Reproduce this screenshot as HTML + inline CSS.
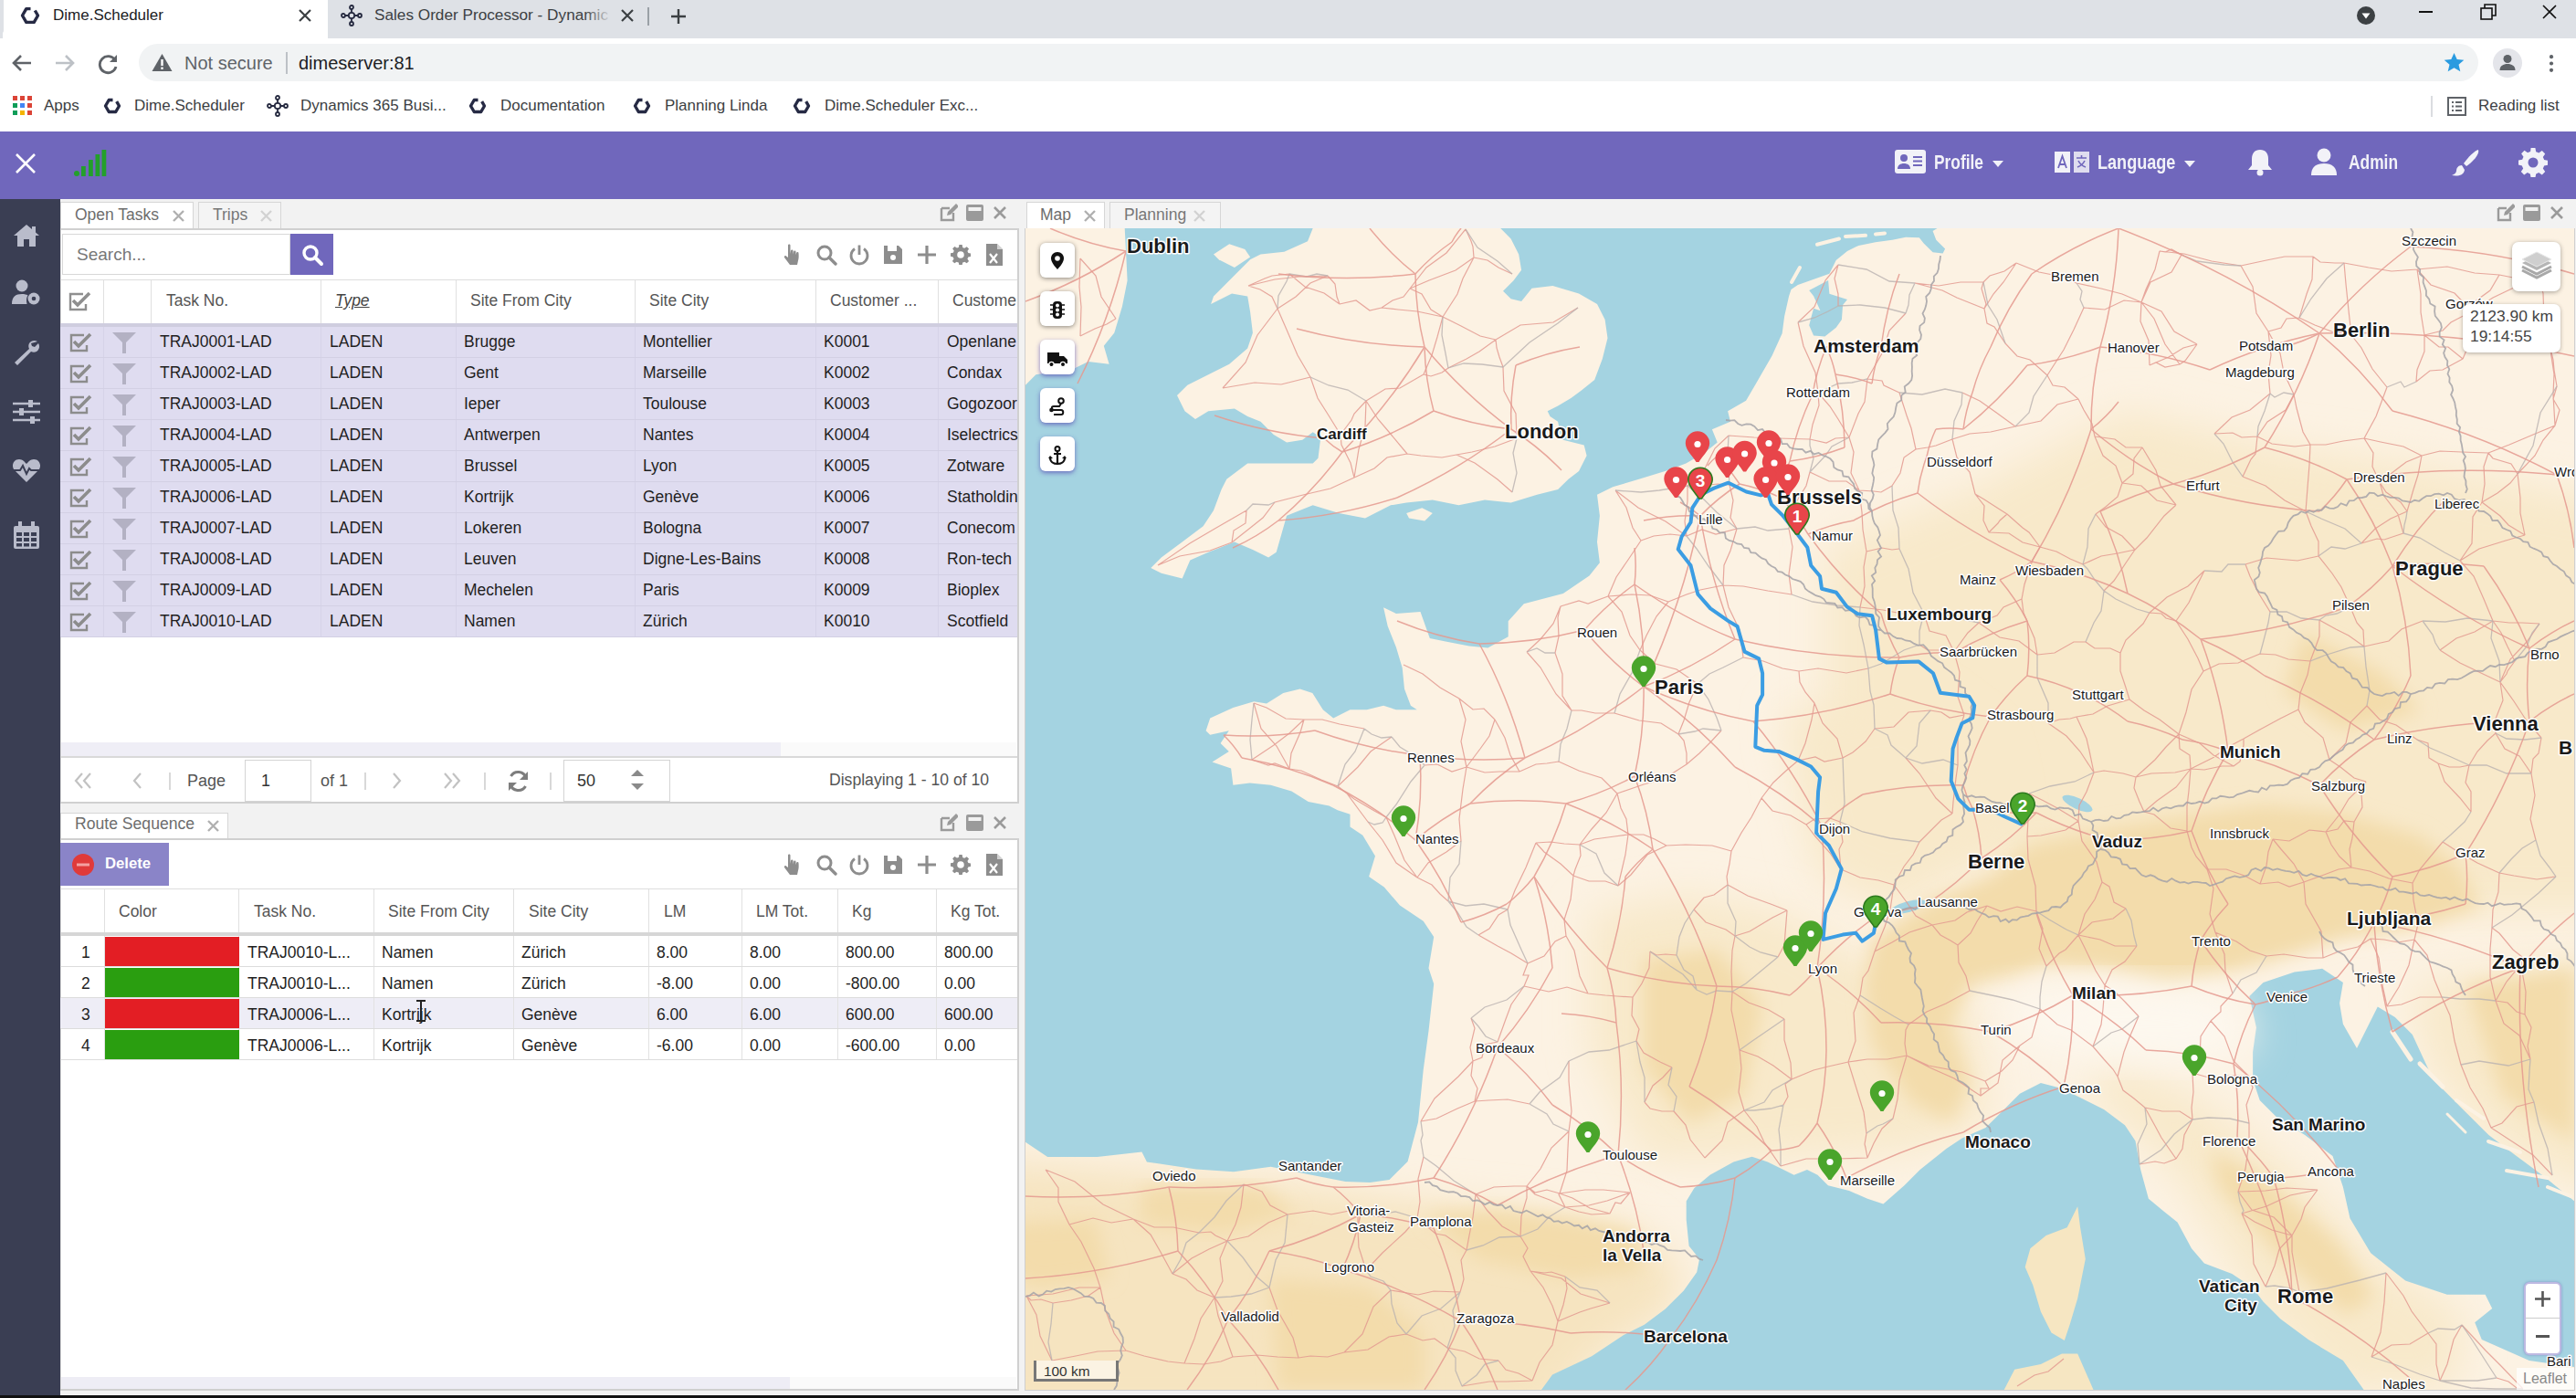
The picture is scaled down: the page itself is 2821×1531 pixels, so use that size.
<!DOCTYPE html><html><head><meta charset="utf-8"><style>html,body{margin:0;padding:0;}body{width:2821px;height:1531px;overflow:hidden;position:relative;font-family:"Liberation Sans",sans-serif;background:#f2f2f2}</style></head><body><div style="position:absolute;left:0px;top:0px;width:2821px;height:42px;background:#dee1e6"></div><div style="position:absolute;left:3px;top:0px;width:356px;height:42px;background:#fff"></div><div style="position:absolute;left:0px;top:0px;width:4px;height:37px;background:#dee1e6;border-radius:0 0 4px 0"></div><svg style="position:absolute;left:21.0px;top:5.0px;" width="24" height="24" viewBox="0 0 24 24"><path d="M12.50 4.64 L7.75 4.64 L3.50 12.00 L7.75 19.36 L16.25 19.36 L20.50 12.00 L17.31 6.48" fill="none" stroke="#262a44" stroke-width="3.4" stroke-linejoin="round"/></svg><div style="position:absolute;left:58px;top:8px;font-size:17px;line-height:17px;color:#202124;font-weight:normal;white-space:nowrap;">Dime.Scheduler</div><svg style="position:absolute;left:326px;top:9px;" width="16" height="16" viewBox="0 0 16 16"><path d="M2 2L14 14M14 2L2 14" stroke="#3c4043" stroke-width="2.2"/></svg><svg style="position:absolute;left:373px;top:5px;" width="24" height="24" viewBox="0 0 24 24"><g fill="none" stroke="#262a40" stroke-width="1.8"><circle cx="12" cy="12" r="3.2"/><circle cx="12" cy="3" r="2"/><circle cx="12" cy="21" r="2"/><circle cx="3" cy="12" r="2"/><circle cx="21" cy="12" r="2"/><path d="M12 5v4M12 15v4M5 12h4M15 12h4"/></g></svg><div style="position:absolute;left:410px;top:8px;font-size:17.2px;line-height:17.2px;color:#3c4043;font-weight:normal;white-space:nowrap;">Sales Order Processor - Dynamic</div><div style="position:absolute;left:640px;top:4px;width:30px;height:30px;background:linear-gradient(90deg,rgba(222,225,230,0),#dee1e6)"></div><svg style="position:absolute;left:679px;top:9px;" width="16" height="16" viewBox="0 0 16 16"><path d="M2 2L14 14M14 2L2 14" stroke="#3c4043" stroke-width="2.2"/></svg><div style="position:absolute;left:709px;top:8px;width:2px;height:20px;background:#9aa0a6"></div><svg style="position:absolute;left:733px;top:8px;" width="20" height="20" viewBox="0 0 20 20"><path d="M10 2V18M2 10H18" stroke="#3c4043" stroke-width="2.4"/></svg><svg style="position:absolute;left:2580px;top:6px;" width="22" height="22" viewBox="0 0 22 22"><circle cx="11" cy="11" r="10" fill="#3c4043"/><path d="M6.5 8.5h9l-4.5 6z" fill="#fff"/></svg><div style="position:absolute;left:2649px;top:12px;width:15px;height:2px;background:#111"></div><svg style="position:absolute;left:2716px;top:4px;" width="18" height="18" viewBox="0 0 18 18"><rect x="1" y="5" width="12" height="12" fill="none" stroke="#111" stroke-width="1.6"/><path d="M5 5V1h12v12h-4" fill="none" stroke="#111" stroke-width="1.6"/></svg><svg style="position:absolute;left:2783px;top:4px;" width="18" height="18" viewBox="0 0 18 18"><path d="M2 2L16 16M16 2L2 16" stroke="#111" stroke-width="1.6"/></svg><div style="position:absolute;left:0px;top:42px;width:2821px;height:102px;background:#fff"></div><svg style="position:absolute;left:12px;top:58px;" width="24" height="22" viewBox="0 0 24 22"><path d="M22 11H4M11 3L3 11L11 19" fill="none" stroke="#5f6368" stroke-width="2.6"/></svg><svg style="position:absolute;left:59px;top:58px;" width="24" height="22" viewBox="0 0 24 22"><path d="M2 11H20M13 3L21 11L13 19" fill="none" stroke="#bdc1c6" stroke-width="2.6"/></svg><svg style="position:absolute;left:107px;top:58px;" width="24" height="24" viewBox="0 0 24 24"><path d="M19 8A9 9 0 1 0 20 15" fill="none" stroke="#5f6368" stroke-width="2.8"/><path d="M21 2v8h-8z" fill="#5f6368"/></svg><div style="position:absolute;left:152px;top:48px;width:2562px;height:41px;background:#f1f3f4;border-radius:21px"></div><svg style="position:absolute;left:166px;top:58px;" width="23" height="21" viewBox="0 0 23 21"><path d="M11.5 1L22.5 20H0.5z" fill="#5f6368"/><rect x="10.3" y="7" width="2.4" height="7" fill="#fff"/><rect x="10.3" y="15.5" width="2.4" height="2.4" fill="#fff"/></svg><div style="position:absolute;left:202px;top:59px;font-size:20px;line-height:20px;color:#5f6368;font-weight:normal;white-space:nowrap;">Not secure</div><div style="position:absolute;left:313px;top:57px;width:2px;height:24px;background:#bdc1c6"></div><div style="position:absolute;left:327px;top:59px;font-size:20px;line-height:20px;color:#202124;font-weight:normal;white-space:nowrap;">dimeserver:81</div><svg style="position:absolute;left:2676px;top:57px;" width="23" height="23" viewBox="0 0 23 23"><path d="M11.5 1l3.2 7 7.6.7-5.8 5 1.8 7.5-6.8-4-6.8 4 1.8-7.5-5.8-5 7.6-.7z" fill="#2a9be0"/></svg><svg style="position:absolute;left:2729px;top:52px;" width="34" height="34" viewBox="0 0 34 34"><circle cx="17" cy="17" r="16" fill="#e4e5ea"/><circle cx="17" cy="12.5" r="4.5" fill="#5f6368"/><path d="M8.5 25c0-5 4-7 8.5-7s8.5 2 8.5 7z" fill="#5f6368"/></svg><svg style="position:absolute;left:2789px;top:59px;" width="10" height="22" viewBox="0 0 10 22"><circle cx="5" cy="3.2" r="2.1" fill="#5f6368"/><circle cx="5" cy="10.5" r="2.1" fill="#5f6368"/><circle cx="5" cy="17.8" r="2.1" fill="#5f6368"/></svg><svg style="position:absolute;left:14px;top:105px;" width="21" height="21" viewBox="0 0 21 21"><rect x="0" y="0" width="5" height="5" fill="#db4437"/><rect x="8" y="0" width="5" height="5" fill="#db4437"/><rect x="16" y="0" width="5" height="5" fill="#db4437"/><rect x="0" y="8" width="5" height="5" fill="#0f9d58"/><rect x="8" y="8" width="5" height="5" fill="#4285f4"/><rect x="16" y="8" width="5" height="5" fill="#db4437"/><rect x="0" y="16" width="5" height="5" fill="#0f9d58"/><rect x="8" y="16" width="5" height="5" fill="#f4b400"/><rect x="16" y="16" width="5" height="5" fill="#db4437"/></svg><div style="position:absolute;left:48px;top:107px;font-size:17px;line-height:17px;color:#3c4043;font-weight:normal;white-space:nowrap;">Apps</div><svg style="position:absolute;left:112.0px;top:105.0px;" width="22" height="22" viewBox="0 0 22 22"><path d="M11.50 4.50 L7.25 4.50 L3.50 11.00 L7.25 17.50 L14.75 17.50 L18.50 11.00 L15.69 6.13" fill="none" stroke="#262a44" stroke-width="3.4" stroke-linejoin="round"/></svg><div style="position:absolute;left:147px;top:107px;font-size:17px;line-height:17px;color:#3c4043;font-weight:normal;white-space:nowrap;">Dime.Scheduler</div><svg style="position:absolute;left:292px;top:104px;" width="24" height="24" viewBox="0 0 24 24"><g fill="none" stroke="#262a40" stroke-width="1.8"><circle cx="12" cy="12" r="3.2"/><circle cx="12" cy="3" r="2"/><circle cx="12" cy="21" r="2"/><circle cx="3" cy="12" r="2"/><circle cx="21" cy="12" r="2"/><path d="M12 5v4M12 15v4M5 12h4M15 12h4"/></g></svg><div style="position:absolute;left:329px;top:107px;font-size:17px;line-height:17px;color:#3c4043;font-weight:normal;white-space:nowrap;">Dynamics 365 Busi...</div><svg style="position:absolute;left:512.0px;top:105.0px;" width="22" height="22" viewBox="0 0 22 22"><path d="M11.50 4.50 L7.25 4.50 L3.50 11.00 L7.25 17.50 L14.75 17.50 L18.50 11.00 L15.69 6.13" fill="none" stroke="#262a44" stroke-width="3.4" stroke-linejoin="round"/></svg><div style="position:absolute;left:548px;top:107px;font-size:17px;line-height:17px;color:#3c4043;font-weight:normal;white-space:nowrap;">Documentation</div><svg style="position:absolute;left:692.0px;top:105.0px;" width="22" height="22" viewBox="0 0 22 22"><path d="M11.50 4.50 L7.25 4.50 L3.50 11.00 L7.25 17.50 L14.75 17.50 L18.50 11.00 L15.69 6.13" fill="none" stroke="#262a44" stroke-width="3.4" stroke-linejoin="round"/></svg><div style="position:absolute;left:728px;top:107px;font-size:17px;line-height:17px;color:#3c4043;font-weight:normal;white-space:nowrap;">Planning Linda</div><svg style="position:absolute;left:867.0px;top:105.0px;" width="22" height="22" viewBox="0 0 22 22"><path d="M11.50 4.50 L7.25 4.50 L3.50 11.00 L7.25 17.50 L14.75 17.50 L18.50 11.00 L15.69 6.13" fill="none" stroke="#262a44" stroke-width="3.4" stroke-linejoin="round"/></svg><div style="position:absolute;left:903px;top:107px;font-size:17px;line-height:17px;color:#3c4043;font-weight:normal;white-space:nowrap;">Dime.Scheduler Exc...</div><div style="position:absolute;left:2662px;top:105px;width:2px;height:23px;background:#dadce0"></div><svg style="position:absolute;left:2680px;top:106px;" width="21" height="21" viewBox="0 0 21 21"><rect x="1" y="1" width="19" height="19" fill="none" stroke="#5f6368" stroke-width="2"/><g fill="#5f6368"><rect x="5" y="5" width="2" height="2"/><rect x="9" y="5" width="7" height="2"/><rect x="5" y="9.5" width="2" height="2"/><rect x="9" y="9.5" width="7" height="2"/><rect x="5" y="14" width="2" height="2"/><rect x="9" y="14" width="7" height="2"/></g></svg><div style="position:absolute;left:2714px;top:107px;font-size:17px;line-height:17px;color:#3c4043;font-weight:normal;white-space:nowrap;">Reading list</div><div style="position:absolute;left:0px;top:144px;width:2821px;height:74px;background:#7067bc"></div><svg style="position:absolute;left:15px;top:166px;" width="26" height="26" viewBox="0 0 26 26"><path d="M3 3L23 23M23 3L3 23" stroke="#fff" stroke-width="2.6"/></svg><svg style="position:absolute;left:78px;top:160px;" width="42" height="36" viewBox="0 0 42 36"><circle cx="6" cy="30" r="3" fill="#23a02b"/><rect x="11" y="22" width="4.8" height="11" fill="#23a02b"/><rect x="19" y="15" width="4.8" height="18" fill="#23a02b"/><rect x="26.5" y="9" width="4.8" height="24" fill="#23a02b"/><rect x="33.5" y="4" width="4.8" height="29" fill="#23a02b"/></svg><svg style="position:absolute;left:2075px;top:164px;" width="34" height="26" viewBox="0 0 34 26"><rect x="0" y="0" width="34" height="26" rx="3" fill="#f2f2f8"/><circle cx="10" cy="9" r="4" fill="#7067bc"/><path d="M3 21c0-4 3-6 7-6s7 2 7 6z" fill="#7067bc"/><rect x="20" y="7" width="10" height="2" fill="#7067bc"/><rect x="20" y="11.5" width="10" height="2" fill="#7067bc"/><rect x="20" y="16" width="10" height="2" fill="#7067bc"/></svg><div style="position:absolute;left:2118px;top:167px;font-size:22px;line-height:22px;color:#f2f2f8;font-weight:bold;white-space:nowrap;transform:scaleX(.788);transform-origin:0 0">Profile</div><svg style="position:absolute;left:2182px;top:176px;" width="12" height="8" viewBox="0 0 12 8"><path d="M0 0H12L6 7z" fill="#f2f2f8"/></svg><svg style="position:absolute;left:2250px;top:166px;" width="38" height="23" viewBox="0 0 38 23"><rect x="0" y="0" width="17" height="23" fill="#f2f2f8"/><rect x="21" y="0" width="17" height="23" fill="#f2f2f8" opacity=".85"/><path d="M4 18L8.5 5 13 18M5.5 14h6" fill="none" stroke="#7067bc" stroke-width="1.8"/><path d="M24 7h11M29.5 4v3M26 10c2 4 5 6 8 7M33 10c-2 4-5 6-8 7" fill="none" stroke="#7067bc" stroke-width="1.6"/></svg><div style="position:absolute;left:2297px;top:167px;font-size:22px;line-height:22px;color:#f2f2f8;font-weight:bold;white-space:nowrap;transform:scaleX(.822);transform-origin:0 0">Language</div><svg style="position:absolute;left:2392px;top:176px;" width="12" height="8" viewBox="0 0 12 8"><path d="M0 0H12L6 7z" fill="#f2f2f8"/></svg><svg style="position:absolute;left:2461px;top:162px;" width="28" height="32" viewBox="0 0 28 32"><path d="M14 2c-6 0-9 4-9 10v7l-4 5h26l-4-5v-7c0-6-3-10-9-10z" fill="#f2f2f8"/><circle cx="14" cy="27" r="3.5" fill="#f2f2f8"/></svg><svg style="position:absolute;left:2531px;top:162px;" width="28" height="30" viewBox="0 0 28 30"><circle cx="14" cy="8" r="7.5" fill="#f2f2f8"/><path d="M0 30c0-9 5-13 14-13s14 4 14 13z" fill="#f2f2f8"/></svg><div style="position:absolute;left:2572px;top:167px;font-size:22px;line-height:22px;color:#f2f2f8;font-weight:bold;white-space:nowrap;transform:scaleX(.789);transform-origin:0 0">Admin</div><svg style="position:absolute;left:2684px;top:162px;" width="32" height="32" viewBox="0 0 32 32"><path d="M30 2c-3 0-12 9-16 15l3 3c6-4 15-13 13-18z" fill="#f2f2f8"/><path d="M12 19c-4 0-6 3-6 6 0 2-2 4-5 5 5 1 13 1 14-6z" fill="#f2f2f8"/></svg><svg style="position:absolute;left:2758px;top:162px;" width="32" height="32" viewBox="0 0 32 32"><path fill="#f2f2f8" d="M13.6 0h4.8l.8 4.2a12 12 0 0 1 3 1.3l3.6-2.4 3.4 3.4-2.4 3.6a12 12 0 0 1 1.3 3l4.2.8v4.8l-4.2.8a12 12 0 0 1-1.3 3l2.4 3.6-3.4 3.4-3.6-2.4a12 12 0 0 1-3 1.3l-.8 4.2h-4.8l-.8-4.2a12 12 0 0 1-3-1.3l-3.6 2.4-3.4-3.4 2.4-3.6a12 12 0 0 1-1.3-3L0 18.4v-4.8l4.2-.8a12 12 0 0 1 1.3-3L3.1 6.2l3.4-3.4 3.6 2.4a12 12 0 0 1 3-1.3zM16 10.5a5.5 5.5 0 1 0 0 11 5.5 5.5 0 1 0 0-11z"/></svg><div style="position:absolute;left:0px;top:218px;width:66px;height:1313px;background:#3a3e53"></div><svg style="position:absolute;left:14px;top:245px;" width="30" height="26" viewBox="0 0 30 26"><path d="M15 1L1 13h4v12h7v-8h6v8h7V13h4L25 9.5V3h-4v3z" fill="#b9bccb"/></svg><svg style="position:absolute;left:13px;top:306px;" width="32" height="30" viewBox="0 0 32 30"><circle cx="11" cy="7" r="6.5" fill="#b9bccb"/><path d="M0 27c0-8 4-11 11-11 3 0 5 .5 6.5 1.5-1.5 2-2 5-1 9.5z" fill="#b9bccb"/><g transform="translate(24 21)"><circle r="6.5" fill="#b9bccb"/><circle r="2.3" fill="#3a3e53"/></g></svg><svg style="position:absolute;left:14px;top:371px;" width="30" height="30" viewBox="0 0 30 30"><path d="M27 3c-3-2-7-1-9 2-1 2-1 4 0 6L2 26l3 3 15-15c2 1 4 1 6 0 3-2 4-6 2-9l-4 4-3-1-1-3z" fill="#b9bccb"/></svg><svg style="position:absolute;left:13px;top:438px;" width="32" height="26" viewBox="0 0 32 26"><g stroke="#b9bccb" stroke-width="2.4"><path d="M1 4h30M1 13h30M1 22h30"/></g><g fill="#b9bccb"><rect x="18" y="0" width="5" height="8"/><rect x="8" y="9" width="5" height="8"/><rect x="20" y="18" width="5" height="8"/></g></svg><svg style="position:absolute;left:13px;top:501px;" width="32" height="28" viewBox="0 0 32 28"><path d="M16 27L3 14C-1 10 1 2 8 2c4 0 6 3 8 5 2-2 4-5 8-5 7 0 9 8 5 12z" fill="#b9bccb"/><path d="M1 14h8l3-5 4 9 3-6 2 2h12" fill="none" stroke="#3a3e53" stroke-width="2"/></svg><svg style="position:absolute;left:15px;top:571px;" width="28" height="30" viewBox="0 0 28 30"><rect x="0" y="5" width="28" height="25" rx="2" fill="#b9bccb"/><rect x="5" y="0" width="4" height="8" fill="#b9bccb"/><rect x="19" y="0" width="4" height="8" fill="#b9bccb"/><g fill="#3a3e53"><rect x="3" y="12" width="6" height="4"/><rect x="11" y="12" width="6" height="4"/><rect x="19" y="12" width="6" height="4"/><rect x="3" y="18" width="6" height="4"/><rect x="11" y="18" width="6" height="4"/><rect x="19" y="18" width="6" height="4"/><rect x="3" y="24" width="6" height="3.5"/><rect x="11" y="24" width="6" height="3.5"/><rect x="19" y="24" width="6" height="3.5"/></g></svg><div style="position:absolute;left:66px;top:218px;width:2755px;height:1310px;background:#f2f2f2"></div><div style="position:absolute;left:0px;top:1528px;width:2821px;height:3px;background:#111"></div><div style="position:absolute;left:66px;top:221px;width:146px;height:30px;background:#fff;border:1px solid #d6d6d6;border-bottom:none;box-sizing:border-box"></div><div style="position:absolute;left:82px;top:227px;font-size:17.5px;line-height:17.5px;color:#6d6d6d;font-weight:normal;white-space:nowrap;">Open Tasks</div><svg style="position:absolute;left:189px;top:230px;" width="13" height="13" viewBox="0 0 13 13"><path d="M1 1L12 12M12 1L1 12" stroke="#b0b0b0" stroke-width="2.4"/></svg><div style="position:absolute;left:217px;top:221px;width:91px;height:29px;background:#f4f4f4;border:1px solid #d6d6d6;border-bottom:none;box-sizing:border-box"></div><div style="position:absolute;left:233px;top:227px;font-size:17.5px;line-height:17.5px;color:#777;font-weight:normal;white-space:nowrap;">Trips</div><svg style="position:absolute;left:285px;top:230px;" width="13" height="13" viewBox="0 0 13 13"><path d="M1 1L12 12M12 1L1 12" stroke="#d2d2d2" stroke-width="2.4"/></svg><svg style="position:absolute;left:1029px;top:223px;" width="20" height="20" viewBox="0 0 20 20"><path d="M2 5h9M2 5v13h13V10" fill="none" stroke="#9a9a9a" stroke-width="2.4"/><path d="M8 13l1-4 9-9 3 3-9 9z" fill="#9a9a9a"/></svg><svg style="position:absolute;left:1058px;top:224px;" width="19" height="18" viewBox="0 0 19 18"><rect x="0" y="0" width="19" height="18" rx="2" fill="#9a9a9a"/><rect x="2.5" y="3" width="14" height="4" fill="#f2f2f2"/></svg><svg style="position:absolute;left:1088px;top:226px;" width="14" height="14" viewBox="0 0 14 14"><path d="M1 1L13 13M13 1L1 13" stroke="#9a9a9a" stroke-width="2.6"/></svg><div style="position:absolute;left:66px;top:250px;width:1050px;height:630px;background:#fff;border:2px solid #d0d0d0;border-left:1px solid #dcdcdc;box-sizing:border-box"></div><div style="position:absolute;left:68px;top:256px;width:250px;height:45px;background:#fff;border:1px solid #d8d8d8;box-sizing:border-box"></div><div style="position:absolute;left:84px;top:269px;font-size:19px;line-height:19px;color:#777;font-weight:normal;white-space:nowrap;">Search...</div><div style="position:absolute;left:318px;top:256px;width:47px;height:45px;background:#7067bc"></div><svg style="position:absolute;left:330px;top:267px;" width="25" height="25" viewBox="0 0 25 25"><circle cx="10" cy="10" r="7" fill="none" stroke="#fff" stroke-width="3.4"/><path d="M15 15L22 22" stroke="#fff" stroke-width="4" stroke-linecap="round"/></svg><svg style="position:absolute;left:856px;top:265.5px;" width="24" height="26" viewBox="0 0 24 26"><path d="M7 2.5c0-1.5 2.5-1.5 2.5 0V12l.5-3.5c.3-1.3 2.3-1.3 2.5 0l.2 4 .4-3c.3-1.3 2.3-1.2 2.4.1l.2 3.4.5-2.3c.3-1.2 2.2-1 2.3.3.3 3 .3 6-.5 8.5L17 24H9l-6-8c-.8-1.2.8-2.7 2-1.6L7 16z" fill="#8d8d8d"/></svg><svg style="position:absolute;left:893px;top:266.5px;" width="24" height="24" viewBox="0 0 24 24"><circle cx="10" cy="10" r="7" fill="none" stroke="#8d8d8d" stroke-width="3"/><path d="M15 15L22 22" stroke="#8d8d8d" stroke-width="3.4" stroke-linecap="round"/></svg><svg style="position:absolute;left:929px;top:266.5px;" width="24" height="24" viewBox="0 0 24 24"><path d="M7 5.5A9 9 0 1 0 17 5.5" fill="none" stroke="#8d8d8d" stroke-width="2.8"/><path d="M12 1.5V12" stroke="#8d8d8d" stroke-width="2.8"/></svg><svg style="position:absolute;left:967px;top:267.5px;" width="22" height="22" viewBox="0 0 22 22"><path d="M1 1h16l4 4v16H1z" fill="#8d8d8d"/><rect x="5" y="1" width="10" height="6" fill="#fff"/><circle cx="11" cy="14" r="3" fill="#fff"/></svg><svg style="position:absolute;left:1003px;top:266.5px;" width="24" height="24" viewBox="0 0 24 24"><path d="M12 2V22M2 12H22" stroke="#8d8d8d" stroke-width="3.2"/></svg><svg style="position:absolute;left:1041px;top:267.5px;" width="22" height="22" viewBox="0 0 32 32"><path fill="#8d8d8d" d="M13.6 0h4.8l.8 4.2a12 12 0 0 1 3 1.3l3.6-2.4 3.4 3.4-2.4 3.6a12 12 0 0 1 1.3 3l4.2.8v4.8l-4.2.8a12 12 0 0 1-1.3 3l2.4 3.6-3.4 3.4-3.6-2.4a12 12 0 0 1-3 1.3l-.8 4.2h-4.8l-.8-4.2a12 12 0 0 1-3-1.3l-3.6 2.4-3.4-3.4 2.4-3.6a12 12 0 0 1-1.3-3L0 18.4v-4.8l4.2-.8a12 12 0 0 1 1.3-3L3.1 6.2l3.4-3.4 3.6 2.4a12 12 0 0 1 3-1.3zM16 10.5a5.5 5.5 0 1 0 0 11 5.5 5.5 0 1 0 0-11z"/></svg><svg style="position:absolute;left:1079px;top:265.5px;" width="20" height="26" viewBox="0 0 20 26"><path d="M1 1h12l6 6v18H1z" fill="#8d8d8d"/><path d="M13 1v6h6" fill="#fff" opacity=".6"/><path d="M5 12l8 10M13 12l-8 10" stroke="#fff" stroke-width="2.2"/></svg><div style="position:absolute;left:66px;top:306px;width:1048px;height:1px;background:#dedede"></div><div style="position:absolute;left:66px;top:354px;width:1048px;height:4px;background:#cfcddf"></div><div style="position:absolute;left:113px;top:307px;width:1px;height:47px;background:#e0e0e0"></div><div style="position:absolute;left:165px;top:307px;width:1px;height:47px;background:#e0e0e0"></div><div style="position:absolute;left:351px;top:307px;width:1px;height:47px;background:#e0e0e0"></div><div style="position:absolute;left:499px;top:307px;width:1px;height:47px;background:#e0e0e0"></div><div style="position:absolute;left:695px;top:307px;width:1px;height:47px;background:#e0e0e0"></div><div style="position:absolute;left:893px;top:307px;width:1px;height:47px;background:#e0e0e0"></div><div style="position:absolute;left:1027px;top:307px;width:1px;height:47px;background:#e0e0e0"></div><svg style="position:absolute;left:74px;top:319px;" width="26" height="23" viewBox="0 0 26 23"><path d="M17 3H3v17h17v-6" fill="none" stroke="#8f8f8f" stroke-width="2.4"/><path d="M6 10l5 5L24 2" fill="none" stroke="#8f8f8f" stroke-width="3.6"/></svg><div style="position:absolute;left:182px;top:321px;font-size:17.5px;line-height:17.5px;color:#555;font-weight:normal;white-space:nowrap;">Task No.</div><div style="position:absolute;left:367px;top:321px;font-size:17.5px;line-height:17.5px;color:#555;font-weight:normal;white-space:nowrap;"><i style="text-decoration:underline;color:#444">Type</i></div><div style="position:absolute;left:515px;top:321px;font-size:17.5px;line-height:17.5px;color:#555;font-weight:normal;white-space:nowrap;">Site From City</div><div style="position:absolute;left:711px;top:321px;font-size:17.5px;line-height:17.5px;color:#555;font-weight:normal;white-space:nowrap;">Site City</div><div style="position:absolute;left:909px;top:321px;font-size:17.5px;line-height:17.5px;color:#555;font-weight:normal;white-space:nowrap;">Customer ...</div><div style="position:absolute;left:1043px;top:321px;font-size:17.5px;line-height:17.5px;color:#555;font-weight:normal;white-space:nowrap;">Custome</div><div style="position:absolute;left:66px;top:358px;width:1048px;height:33px;background:#dfdcf0"></div><div style="position:absolute;left:66px;top:391px;width:1048px;height:1px;background:#d3d0e4"></div><div style="position:absolute;left:113px;top:358px;width:1px;height:33px;background:#d6d3e8"></div><div style="position:absolute;left:165px;top:358px;width:1px;height:33px;background:#d6d3e8"></div><div style="position:absolute;left:351px;top:358px;width:1px;height:33px;background:#d6d3e8"></div><div style="position:absolute;left:499px;top:358px;width:1px;height:33px;background:#d6d3e8"></div><div style="position:absolute;left:695px;top:358px;width:1px;height:33px;background:#d6d3e8"></div><div style="position:absolute;left:893px;top:358px;width:1px;height:33px;background:#d6d3e8"></div><div style="position:absolute;left:1027px;top:358px;width:1px;height:33px;background:#d6d3e8"></div><svg style="position:absolute;left:75px;top:364px;" width="26" height="23" viewBox="0 0 26 23"><path d="M17 3H3v17h17v-6" fill="none" stroke="#8c8c8c" stroke-width="2.4"/><path d="M6 10l5 5L24 2" fill="none" stroke="#8c8c8c" stroke-width="3.6"/></svg><svg style="position:absolute;left:123px;top:363px;" width="26" height="25" viewBox="0 0 26 25"><path d="M0 1h26L15 12v12h-4V12z" fill="#b3b1c3"/></svg><div style="position:absolute;left:175px;top:366px;font-size:17.5px;line-height:17.5px;color:#1f1f1f;font-weight:normal;white-space:nowrap;">TRAJ0001-LAD</div><div style="position:absolute;left:361px;top:366px;font-size:17.5px;line-height:17.5px;color:#1f1f1f;font-weight:normal;white-space:nowrap;">LADEN</div><div style="position:absolute;left:508px;top:366px;font-size:17.5px;line-height:17.5px;color:#1f1f1f;font-weight:normal;white-space:nowrap;">Brugge</div><div style="position:absolute;left:704px;top:366px;font-size:17.5px;line-height:17.5px;color:#1f1f1f;font-weight:normal;white-space:nowrap;">Montellier</div><div style="position:absolute;left:902px;top:366px;font-size:17.5px;line-height:17.5px;color:#1f1f1f;font-weight:normal;white-space:nowrap;">K0001</div><div style="position:absolute;left:1037px;top:366px;font-size:17.5px;line-height:17.5px;color:#1f1f1f;font-weight:normal;white-space:nowrap;">Openlane</div><div style="position:absolute;left:66px;top:392px;width:1048px;height:33px;background:#dfdcf0"></div><div style="position:absolute;left:66px;top:425px;width:1048px;height:1px;background:#d3d0e4"></div><div style="position:absolute;left:113px;top:392px;width:1px;height:33px;background:#d6d3e8"></div><div style="position:absolute;left:165px;top:392px;width:1px;height:33px;background:#d6d3e8"></div><div style="position:absolute;left:351px;top:392px;width:1px;height:33px;background:#d6d3e8"></div><div style="position:absolute;left:499px;top:392px;width:1px;height:33px;background:#d6d3e8"></div><div style="position:absolute;left:695px;top:392px;width:1px;height:33px;background:#d6d3e8"></div><div style="position:absolute;left:893px;top:392px;width:1px;height:33px;background:#d6d3e8"></div><div style="position:absolute;left:1027px;top:392px;width:1px;height:33px;background:#d6d3e8"></div><svg style="position:absolute;left:75px;top:398px;" width="26" height="23" viewBox="0 0 26 23"><path d="M17 3H3v17h17v-6" fill="none" stroke="#8c8c8c" stroke-width="2.4"/><path d="M6 10l5 5L24 2" fill="none" stroke="#8c8c8c" stroke-width="3.6"/></svg><svg style="position:absolute;left:123px;top:397px;" width="26" height="25" viewBox="0 0 26 25"><path d="M0 1h26L15 12v12h-4V12z" fill="#b3b1c3"/></svg><div style="position:absolute;left:175px;top:400px;font-size:17.5px;line-height:17.5px;color:#1f1f1f;font-weight:normal;white-space:nowrap;">TRAJ0002-LAD</div><div style="position:absolute;left:361px;top:400px;font-size:17.5px;line-height:17.5px;color:#1f1f1f;font-weight:normal;white-space:nowrap;">LADEN</div><div style="position:absolute;left:508px;top:400px;font-size:17.5px;line-height:17.5px;color:#1f1f1f;font-weight:normal;white-space:nowrap;">Gent</div><div style="position:absolute;left:704px;top:400px;font-size:17.5px;line-height:17.5px;color:#1f1f1f;font-weight:normal;white-space:nowrap;">Marseille</div><div style="position:absolute;left:902px;top:400px;font-size:17.5px;line-height:17.5px;color:#1f1f1f;font-weight:normal;white-space:nowrap;">K0002</div><div style="position:absolute;left:1037px;top:400px;font-size:17.5px;line-height:17.5px;color:#1f1f1f;font-weight:normal;white-space:nowrap;">Condax</div><div style="position:absolute;left:66px;top:426px;width:1048px;height:33px;background:#dfdcf0"></div><div style="position:absolute;left:66px;top:459px;width:1048px;height:1px;background:#d3d0e4"></div><div style="position:absolute;left:113px;top:426px;width:1px;height:33px;background:#d6d3e8"></div><div style="position:absolute;left:165px;top:426px;width:1px;height:33px;background:#d6d3e8"></div><div style="position:absolute;left:351px;top:426px;width:1px;height:33px;background:#d6d3e8"></div><div style="position:absolute;left:499px;top:426px;width:1px;height:33px;background:#d6d3e8"></div><div style="position:absolute;left:695px;top:426px;width:1px;height:33px;background:#d6d3e8"></div><div style="position:absolute;left:893px;top:426px;width:1px;height:33px;background:#d6d3e8"></div><div style="position:absolute;left:1027px;top:426px;width:1px;height:33px;background:#d6d3e8"></div><svg style="position:absolute;left:75px;top:432px;" width="26" height="23" viewBox="0 0 26 23"><path d="M17 3H3v17h17v-6" fill="none" stroke="#8c8c8c" stroke-width="2.4"/><path d="M6 10l5 5L24 2" fill="none" stroke="#8c8c8c" stroke-width="3.6"/></svg><svg style="position:absolute;left:123px;top:431px;" width="26" height="25" viewBox="0 0 26 25"><path d="M0 1h26L15 12v12h-4V12z" fill="#b3b1c3"/></svg><div style="position:absolute;left:175px;top:434px;font-size:17.5px;line-height:17.5px;color:#1f1f1f;font-weight:normal;white-space:nowrap;">TRAJ0003-LAD</div><div style="position:absolute;left:361px;top:434px;font-size:17.5px;line-height:17.5px;color:#1f1f1f;font-weight:normal;white-space:nowrap;">LADEN</div><div style="position:absolute;left:508px;top:434px;font-size:17.5px;line-height:17.5px;color:#1f1f1f;font-weight:normal;white-space:nowrap;">Ieper</div><div style="position:absolute;left:704px;top:434px;font-size:17.5px;line-height:17.5px;color:#1f1f1f;font-weight:normal;white-space:nowrap;">Toulouse</div><div style="position:absolute;left:902px;top:434px;font-size:17.5px;line-height:17.5px;color:#1f1f1f;font-weight:normal;white-space:nowrap;">K0003</div><div style="position:absolute;left:1037px;top:434px;font-size:17.5px;line-height:17.5px;color:#1f1f1f;font-weight:normal;white-space:nowrap;">Gogozoor</div><div style="position:absolute;left:66px;top:460px;width:1048px;height:33px;background:#dfdcf0"></div><div style="position:absolute;left:66px;top:493px;width:1048px;height:1px;background:#d3d0e4"></div><div style="position:absolute;left:113px;top:460px;width:1px;height:33px;background:#d6d3e8"></div><div style="position:absolute;left:165px;top:460px;width:1px;height:33px;background:#d6d3e8"></div><div style="position:absolute;left:351px;top:460px;width:1px;height:33px;background:#d6d3e8"></div><div style="position:absolute;left:499px;top:460px;width:1px;height:33px;background:#d6d3e8"></div><div style="position:absolute;left:695px;top:460px;width:1px;height:33px;background:#d6d3e8"></div><div style="position:absolute;left:893px;top:460px;width:1px;height:33px;background:#d6d3e8"></div><div style="position:absolute;left:1027px;top:460px;width:1px;height:33px;background:#d6d3e8"></div><svg style="position:absolute;left:75px;top:466px;" width="26" height="23" viewBox="0 0 26 23"><path d="M17 3H3v17h17v-6" fill="none" stroke="#8c8c8c" stroke-width="2.4"/><path d="M6 10l5 5L24 2" fill="none" stroke="#8c8c8c" stroke-width="3.6"/></svg><svg style="position:absolute;left:123px;top:465px;" width="26" height="25" viewBox="0 0 26 25"><path d="M0 1h26L15 12v12h-4V12z" fill="#b3b1c3"/></svg><div style="position:absolute;left:175px;top:468px;font-size:17.5px;line-height:17.5px;color:#1f1f1f;font-weight:normal;white-space:nowrap;">TRAJ0004-LAD</div><div style="position:absolute;left:361px;top:468px;font-size:17.5px;line-height:17.5px;color:#1f1f1f;font-weight:normal;white-space:nowrap;">LADEN</div><div style="position:absolute;left:508px;top:468px;font-size:17.5px;line-height:17.5px;color:#1f1f1f;font-weight:normal;white-space:nowrap;">Antwerpen</div><div style="position:absolute;left:704px;top:468px;font-size:17.5px;line-height:17.5px;color:#1f1f1f;font-weight:normal;white-space:nowrap;">Nantes</div><div style="position:absolute;left:902px;top:468px;font-size:17.5px;line-height:17.5px;color:#1f1f1f;font-weight:normal;white-space:nowrap;">K0004</div><div style="position:absolute;left:1037px;top:468px;font-size:17.5px;line-height:17.5px;color:#1f1f1f;font-weight:normal;white-space:nowrap;">Iselectrics</div><div style="position:absolute;left:66px;top:494px;width:1048px;height:33px;background:#dfdcf0"></div><div style="position:absolute;left:66px;top:527px;width:1048px;height:1px;background:#d3d0e4"></div><div style="position:absolute;left:113px;top:494px;width:1px;height:33px;background:#d6d3e8"></div><div style="position:absolute;left:165px;top:494px;width:1px;height:33px;background:#d6d3e8"></div><div style="position:absolute;left:351px;top:494px;width:1px;height:33px;background:#d6d3e8"></div><div style="position:absolute;left:499px;top:494px;width:1px;height:33px;background:#d6d3e8"></div><div style="position:absolute;left:695px;top:494px;width:1px;height:33px;background:#d6d3e8"></div><div style="position:absolute;left:893px;top:494px;width:1px;height:33px;background:#d6d3e8"></div><div style="position:absolute;left:1027px;top:494px;width:1px;height:33px;background:#d6d3e8"></div><svg style="position:absolute;left:75px;top:500px;" width="26" height="23" viewBox="0 0 26 23"><path d="M17 3H3v17h17v-6" fill="none" stroke="#8c8c8c" stroke-width="2.4"/><path d="M6 10l5 5L24 2" fill="none" stroke="#8c8c8c" stroke-width="3.6"/></svg><svg style="position:absolute;left:123px;top:499px;" width="26" height="25" viewBox="0 0 26 25"><path d="M0 1h26L15 12v12h-4V12z" fill="#b3b1c3"/></svg><div style="position:absolute;left:175px;top:502px;font-size:17.5px;line-height:17.5px;color:#1f1f1f;font-weight:normal;white-space:nowrap;">TRAJ0005-LAD</div><div style="position:absolute;left:361px;top:502px;font-size:17.5px;line-height:17.5px;color:#1f1f1f;font-weight:normal;white-space:nowrap;">LADEN</div><div style="position:absolute;left:508px;top:502px;font-size:17.5px;line-height:17.5px;color:#1f1f1f;font-weight:normal;white-space:nowrap;">Brussel</div><div style="position:absolute;left:704px;top:502px;font-size:17.5px;line-height:17.5px;color:#1f1f1f;font-weight:normal;white-space:nowrap;">Lyon</div><div style="position:absolute;left:902px;top:502px;font-size:17.5px;line-height:17.5px;color:#1f1f1f;font-weight:normal;white-space:nowrap;">K0005</div><div style="position:absolute;left:1037px;top:502px;font-size:17.5px;line-height:17.5px;color:#1f1f1f;font-weight:normal;white-space:nowrap;">Zotware</div><div style="position:absolute;left:66px;top:528px;width:1048px;height:33px;background:#dfdcf0"></div><div style="position:absolute;left:66px;top:561px;width:1048px;height:1px;background:#d3d0e4"></div><div style="position:absolute;left:113px;top:528px;width:1px;height:33px;background:#d6d3e8"></div><div style="position:absolute;left:165px;top:528px;width:1px;height:33px;background:#d6d3e8"></div><div style="position:absolute;left:351px;top:528px;width:1px;height:33px;background:#d6d3e8"></div><div style="position:absolute;left:499px;top:528px;width:1px;height:33px;background:#d6d3e8"></div><div style="position:absolute;left:695px;top:528px;width:1px;height:33px;background:#d6d3e8"></div><div style="position:absolute;left:893px;top:528px;width:1px;height:33px;background:#d6d3e8"></div><div style="position:absolute;left:1027px;top:528px;width:1px;height:33px;background:#d6d3e8"></div><svg style="position:absolute;left:75px;top:534px;" width="26" height="23" viewBox="0 0 26 23"><path d="M17 3H3v17h17v-6" fill="none" stroke="#8c8c8c" stroke-width="2.4"/><path d="M6 10l5 5L24 2" fill="none" stroke="#8c8c8c" stroke-width="3.6"/></svg><svg style="position:absolute;left:123px;top:533px;" width="26" height="25" viewBox="0 0 26 25"><path d="M0 1h26L15 12v12h-4V12z" fill="#b3b1c3"/></svg><div style="position:absolute;left:175px;top:536px;font-size:17.5px;line-height:17.5px;color:#1f1f1f;font-weight:normal;white-space:nowrap;">TRAJ0006-LAD</div><div style="position:absolute;left:361px;top:536px;font-size:17.5px;line-height:17.5px;color:#1f1f1f;font-weight:normal;white-space:nowrap;">LADEN</div><div style="position:absolute;left:508px;top:536px;font-size:17.5px;line-height:17.5px;color:#1f1f1f;font-weight:normal;white-space:nowrap;">Kortrijk</div><div style="position:absolute;left:704px;top:536px;font-size:17.5px;line-height:17.5px;color:#1f1f1f;font-weight:normal;white-space:nowrap;">Genève</div><div style="position:absolute;left:902px;top:536px;font-size:17.5px;line-height:17.5px;color:#1f1f1f;font-weight:normal;white-space:nowrap;">K0006</div><div style="position:absolute;left:1037px;top:536px;font-size:17.5px;line-height:17.5px;color:#1f1f1f;font-weight:normal;white-space:nowrap;">Statholdin</div><div style="position:absolute;left:66px;top:562px;width:1048px;height:33px;background:#dfdcf0"></div><div style="position:absolute;left:66px;top:595px;width:1048px;height:1px;background:#d3d0e4"></div><div style="position:absolute;left:113px;top:562px;width:1px;height:33px;background:#d6d3e8"></div><div style="position:absolute;left:165px;top:562px;width:1px;height:33px;background:#d6d3e8"></div><div style="position:absolute;left:351px;top:562px;width:1px;height:33px;background:#d6d3e8"></div><div style="position:absolute;left:499px;top:562px;width:1px;height:33px;background:#d6d3e8"></div><div style="position:absolute;left:695px;top:562px;width:1px;height:33px;background:#d6d3e8"></div><div style="position:absolute;left:893px;top:562px;width:1px;height:33px;background:#d6d3e8"></div><div style="position:absolute;left:1027px;top:562px;width:1px;height:33px;background:#d6d3e8"></div><svg style="position:absolute;left:75px;top:568px;" width="26" height="23" viewBox="0 0 26 23"><path d="M17 3H3v17h17v-6" fill="none" stroke="#8c8c8c" stroke-width="2.4"/><path d="M6 10l5 5L24 2" fill="none" stroke="#8c8c8c" stroke-width="3.6"/></svg><svg style="position:absolute;left:123px;top:567px;" width="26" height="25" viewBox="0 0 26 25"><path d="M0 1h26L15 12v12h-4V12z" fill="#b3b1c3"/></svg><div style="position:absolute;left:175px;top:570px;font-size:17.5px;line-height:17.5px;color:#1f1f1f;font-weight:normal;white-space:nowrap;">TRAJ0007-LAD</div><div style="position:absolute;left:361px;top:570px;font-size:17.5px;line-height:17.5px;color:#1f1f1f;font-weight:normal;white-space:nowrap;">LADEN</div><div style="position:absolute;left:508px;top:570px;font-size:17.5px;line-height:17.5px;color:#1f1f1f;font-weight:normal;white-space:nowrap;">Lokeren</div><div style="position:absolute;left:704px;top:570px;font-size:17.5px;line-height:17.5px;color:#1f1f1f;font-weight:normal;white-space:nowrap;">Bologna</div><div style="position:absolute;left:902px;top:570px;font-size:17.5px;line-height:17.5px;color:#1f1f1f;font-weight:normal;white-space:nowrap;">K0007</div><div style="position:absolute;left:1037px;top:570px;font-size:17.5px;line-height:17.5px;color:#1f1f1f;font-weight:normal;white-space:nowrap;">Conecom</div><div style="position:absolute;left:66px;top:596px;width:1048px;height:33px;background:#dfdcf0"></div><div style="position:absolute;left:66px;top:629px;width:1048px;height:1px;background:#d3d0e4"></div><div style="position:absolute;left:113px;top:596px;width:1px;height:33px;background:#d6d3e8"></div><div style="position:absolute;left:165px;top:596px;width:1px;height:33px;background:#d6d3e8"></div><div style="position:absolute;left:351px;top:596px;width:1px;height:33px;background:#d6d3e8"></div><div style="position:absolute;left:499px;top:596px;width:1px;height:33px;background:#d6d3e8"></div><div style="position:absolute;left:695px;top:596px;width:1px;height:33px;background:#d6d3e8"></div><div style="position:absolute;left:893px;top:596px;width:1px;height:33px;background:#d6d3e8"></div><div style="position:absolute;left:1027px;top:596px;width:1px;height:33px;background:#d6d3e8"></div><svg style="position:absolute;left:75px;top:602px;" width="26" height="23" viewBox="0 0 26 23"><path d="M17 3H3v17h17v-6" fill="none" stroke="#8c8c8c" stroke-width="2.4"/><path d="M6 10l5 5L24 2" fill="none" stroke="#8c8c8c" stroke-width="3.6"/></svg><svg style="position:absolute;left:123px;top:601px;" width="26" height="25" viewBox="0 0 26 25"><path d="M0 1h26L15 12v12h-4V12z" fill="#b3b1c3"/></svg><div style="position:absolute;left:175px;top:604px;font-size:17.5px;line-height:17.5px;color:#1f1f1f;font-weight:normal;white-space:nowrap;">TRAJ0008-LAD</div><div style="position:absolute;left:361px;top:604px;font-size:17.5px;line-height:17.5px;color:#1f1f1f;font-weight:normal;white-space:nowrap;">LADEN</div><div style="position:absolute;left:508px;top:604px;font-size:17.5px;line-height:17.5px;color:#1f1f1f;font-weight:normal;white-space:nowrap;">Leuven</div><div style="position:absolute;left:704px;top:604px;font-size:17.5px;line-height:17.5px;color:#1f1f1f;font-weight:normal;white-space:nowrap;">Digne-Les-Bains</div><div style="position:absolute;left:902px;top:604px;font-size:17.5px;line-height:17.5px;color:#1f1f1f;font-weight:normal;white-space:nowrap;">K0008</div><div style="position:absolute;left:1037px;top:604px;font-size:17.5px;line-height:17.5px;color:#1f1f1f;font-weight:normal;white-space:nowrap;">Ron-tech</div><div style="position:absolute;left:66px;top:630px;width:1048px;height:33px;background:#dfdcf0"></div><div style="position:absolute;left:66px;top:663px;width:1048px;height:1px;background:#d3d0e4"></div><div style="position:absolute;left:113px;top:630px;width:1px;height:33px;background:#d6d3e8"></div><div style="position:absolute;left:165px;top:630px;width:1px;height:33px;background:#d6d3e8"></div><div style="position:absolute;left:351px;top:630px;width:1px;height:33px;background:#d6d3e8"></div><div style="position:absolute;left:499px;top:630px;width:1px;height:33px;background:#d6d3e8"></div><div style="position:absolute;left:695px;top:630px;width:1px;height:33px;background:#d6d3e8"></div><div style="position:absolute;left:893px;top:630px;width:1px;height:33px;background:#d6d3e8"></div><div style="position:absolute;left:1027px;top:630px;width:1px;height:33px;background:#d6d3e8"></div><svg style="position:absolute;left:75px;top:636px;" width="26" height="23" viewBox="0 0 26 23"><path d="M17 3H3v17h17v-6" fill="none" stroke="#8c8c8c" stroke-width="2.4"/><path d="M6 10l5 5L24 2" fill="none" stroke="#8c8c8c" stroke-width="3.6"/></svg><svg style="position:absolute;left:123px;top:635px;" width="26" height="25" viewBox="0 0 26 25"><path d="M0 1h26L15 12v12h-4V12z" fill="#b3b1c3"/></svg><div style="position:absolute;left:175px;top:638px;font-size:17.5px;line-height:17.5px;color:#1f1f1f;font-weight:normal;white-space:nowrap;">TRAJ0009-LAD</div><div style="position:absolute;left:361px;top:638px;font-size:17.5px;line-height:17.5px;color:#1f1f1f;font-weight:normal;white-space:nowrap;">LADEN</div><div style="position:absolute;left:508px;top:638px;font-size:17.5px;line-height:17.5px;color:#1f1f1f;font-weight:normal;white-space:nowrap;">Mechelen</div><div style="position:absolute;left:704px;top:638px;font-size:17.5px;line-height:17.5px;color:#1f1f1f;font-weight:normal;white-space:nowrap;">Paris</div><div style="position:absolute;left:902px;top:638px;font-size:17.5px;line-height:17.5px;color:#1f1f1f;font-weight:normal;white-space:nowrap;">K0009</div><div style="position:absolute;left:1037px;top:638px;font-size:17.5px;line-height:17.5px;color:#1f1f1f;font-weight:normal;white-space:nowrap;">Bioplex</div><div style="position:absolute;left:66px;top:664px;width:1048px;height:33px;background:#dfdcf0"></div><div style="position:absolute;left:66px;top:697px;width:1048px;height:1px;background:#d3d0e4"></div><div style="position:absolute;left:113px;top:664px;width:1px;height:33px;background:#d6d3e8"></div><div style="position:absolute;left:165px;top:664px;width:1px;height:33px;background:#d6d3e8"></div><div style="position:absolute;left:351px;top:664px;width:1px;height:33px;background:#d6d3e8"></div><div style="position:absolute;left:499px;top:664px;width:1px;height:33px;background:#d6d3e8"></div><div style="position:absolute;left:695px;top:664px;width:1px;height:33px;background:#d6d3e8"></div><div style="position:absolute;left:893px;top:664px;width:1px;height:33px;background:#d6d3e8"></div><div style="position:absolute;left:1027px;top:664px;width:1px;height:33px;background:#d6d3e8"></div><svg style="position:absolute;left:75px;top:670px;" width="26" height="23" viewBox="0 0 26 23"><path d="M17 3H3v17h17v-6" fill="none" stroke="#8c8c8c" stroke-width="2.4"/><path d="M6 10l5 5L24 2" fill="none" stroke="#8c8c8c" stroke-width="3.6"/></svg><svg style="position:absolute;left:123px;top:669px;" width="26" height="25" viewBox="0 0 26 25"><path d="M0 1h26L15 12v12h-4V12z" fill="#b3b1c3"/></svg><div style="position:absolute;left:175px;top:672px;font-size:17.5px;line-height:17.5px;color:#1f1f1f;font-weight:normal;white-space:nowrap;">TRAJ0010-LAD</div><div style="position:absolute;left:361px;top:672px;font-size:17.5px;line-height:17.5px;color:#1f1f1f;font-weight:normal;white-space:nowrap;">LADEN</div><div style="position:absolute;left:508px;top:672px;font-size:17.5px;line-height:17.5px;color:#1f1f1f;font-weight:normal;white-space:nowrap;">Namen</div><div style="position:absolute;left:704px;top:672px;font-size:17.5px;line-height:17.5px;color:#1f1f1f;font-weight:normal;white-space:nowrap;">Zürich</div><div style="position:absolute;left:902px;top:672px;font-size:17.5px;line-height:17.5px;color:#1f1f1f;font-weight:normal;white-space:nowrap;">K0010</div><div style="position:absolute;left:1037px;top:672px;font-size:17.5px;line-height:17.5px;color:#1f1f1f;font-weight:normal;white-space:nowrap;">Scotfield</div><div style="position:absolute;left:1116px;top:300px;width:6px;height:400px;background:#f2f2f2"></div><div style="position:absolute;left:67px;top:813px;width:1046px;height:15px;background:#fafafa"></div><div style="position:absolute;left:67px;top:813px;width:788px;height:15px;background:#efeef6"></div><div style="position:absolute;left:66px;top:828px;width:1048px;height:2px;background:#d9d9d9"></div><svg style="position:absolute;left:80px;top:845px;" width="22" height="20" viewBox="0 0 22 20"><path d="M10 2L3 10l7 8M19 2l-7 8 7 8" fill="none" stroke="#c2c2c2" stroke-width="2.2"/></svg><svg style="position:absolute;left:143px;top:845px;" width="14" height="20" viewBox="0 0 14 20"><path d="M11 2L4 10l7 8" fill="none" stroke="#c2c2c2" stroke-width="2.2"/></svg><div style="position:absolute;left:185px;top:846px;width:2px;height:19px;background:#d8d8d8"></div><div style="position:absolute;left:205px;top:846px;font-size:18px;line-height:18px;color:#555;font-weight:normal;white-space:nowrap;">Page</div><div style="position:absolute;left:268px;top:832px;width:73px;height:46px;background:#fff;border:1px solid #d4d4d4;box-sizing:border-box"></div><div style="position:absolute;left:286px;top:846px;font-size:18px;line-height:18px;color:#333;font-weight:normal;white-space:nowrap;">1</div><div style="position:absolute;left:351px;top:846px;font-size:18px;line-height:18px;color:#555;font-weight:normal;white-space:nowrap;">of 1</div><div style="position:absolute;left:399px;top:846px;width:2px;height:19px;background:#d8d8d8"></div><svg style="position:absolute;left:428px;top:845px;" width="14" height="20" viewBox="0 0 14 20"><path d="M3 2l7 8-7 8" fill="none" stroke="#c2c2c2" stroke-width="2.2"/></svg><svg style="position:absolute;left:484px;top:845px;" width="22" height="20" viewBox="0 0 22 20"><path d="M3 2l7 8-7 8M12 2l7 8-7 8" fill="none" stroke="#c2c2c2" stroke-width="2.2"/></svg><div style="position:absolute;left:530px;top:846px;width:2px;height:19px;background:#d8d8d8"></div><svg style="position:absolute;left:555px;top:843px;" width="25" height="25" viewBox="0 0 25 25"><path d="M21 9A9 9 0 0 0 4.5 7" fill="none" stroke="#7d7d7d" stroke-width="3"/><path d="M4 16A9 9 0 0 0 20.5 18" fill="none" stroke="#7d7d7d" stroke-width="3"/><path d="M23 2v9h-9z" fill="#7d7d7d"/><path d="M2 23v-9h9z" fill="#7d7d7d"/></svg><div style="position:absolute;left:602px;top:846px;width:2px;height:19px;background:#d8d8d8"></div><div style="position:absolute;left:617px;top:832px;width:117px;height:46px;background:#fff;border:1px solid #d4d4d4;box-sizing:border-box"></div><div style="position:absolute;left:632px;top:846px;font-size:18px;line-height:18px;color:#333;font-weight:normal;white-space:nowrap;">50</div><svg style="position:absolute;left:690px;top:842px;" width="16" height="24" viewBox="0 0 16 24"><path d="M1 8L8 1l7 7z" fill="#8a8a8a"/><path d="M1 16l7 7 7-7z" fill="#8a8a8a"/></svg><div style="position:absolute;left:908px;top:846px;font-size:17.6px;line-height:17.6px;color:#555;font-weight:normal;white-space:nowrap;">Displaying 1 - 10 of 10</div><div style="position:absolute;left:66px;top:890px;width:184px;height:28px;background:#fff;border:1px solid #d6d6d6;border-bottom:none;box-sizing:border-box"></div><div style="position:absolute;left:82px;top:894px;font-size:17.6px;line-height:17.6px;color:#6d6d6d;font-weight:normal;white-space:nowrap;">Route Sequence</div><svg style="position:absolute;left:227px;top:898px;" width="13" height="13" viewBox="0 0 13 13"><path d="M1 1L12 12M12 1L1 12" stroke="#b0b0b0" stroke-width="2.4"/></svg><svg style="position:absolute;left:1029px;top:891px;" width="20" height="20" viewBox="0 0 20 20"><path d="M2 5h9M2 5v13h13V10" fill="none" stroke="#9a9a9a" stroke-width="2.4"/><path d="M8 13l1-4 9-9 3 3-9 9z" fill="#9a9a9a"/></svg><svg style="position:absolute;left:1058px;top:892px;" width="19" height="18" viewBox="0 0 19 18"><rect x="0" y="0" width="19" height="18" rx="2" fill="#9a9a9a"/><rect x="2.5" y="3" width="14" height="4" fill="#f2f2f2"/></svg><svg style="position:absolute;left:1088px;top:894px;" width="14" height="14" viewBox="0 0 14 14"><path d="M1 1L13 13M13 1L1 13" stroke="#9a9a9a" stroke-width="2.6"/></svg><div style="position:absolute;left:66px;top:918px;width:1050px;height:605px;background:#fff;border:2px solid #d0d0d0;border-left:1px solid #dcdcdc;box-sizing:border-box"></div><div style="position:absolute;left:66px;top:923px;width:119px;height:47px;background:#8a84c8"></div><svg style="position:absolute;left:78px;top:934px;" width="26" height="26" viewBox="0 0 26 26"><circle cx="13" cy="13" r="12" fill="#e03a3a"/><rect x="6" y="11.5" width="14" height="3" fill="#f4a0a0"/></svg><div style="position:absolute;left:115px;top:938px;font-size:16.7px;line-height:16.7px;color:#fff;font-weight:bold;white-space:nowrap;">Delete</div><svg style="position:absolute;left:856px;top:933.5px;" width="24" height="26" viewBox="0 0 24 26"><path d="M7 2.5c0-1.5 2.5-1.5 2.5 0V12l.5-3.5c.3-1.3 2.3-1.3 2.5 0l.2 4 .4-3c.3-1.3 2.3-1.2 2.4.1l.2 3.4.5-2.3c.3-1.2 2.2-1 2.3.3.3 3 .3 6-.5 8.5L17 24H9l-6-8c-.8-1.2.8-2.7 2-1.6L7 16z" fill="#8d8d8d"/></svg><svg style="position:absolute;left:893px;top:934.5px;" width="24" height="24" viewBox="0 0 24 24"><circle cx="10" cy="10" r="7" fill="none" stroke="#8d8d8d" stroke-width="3"/><path d="M15 15L22 22" stroke="#8d8d8d" stroke-width="3.4" stroke-linecap="round"/></svg><svg style="position:absolute;left:929px;top:934.5px;" width="24" height="24" viewBox="0 0 24 24"><path d="M7 5.5A9 9 0 1 0 17 5.5" fill="none" stroke="#8d8d8d" stroke-width="2.8"/><path d="M12 1.5V12" stroke="#8d8d8d" stroke-width="2.8"/></svg><svg style="position:absolute;left:967px;top:935.5px;" width="22" height="22" viewBox="0 0 22 22"><path d="M1 1h16l4 4v16H1z" fill="#8d8d8d"/><rect x="5" y="1" width="10" height="6" fill="#fff"/><circle cx="11" cy="14" r="3" fill="#fff"/></svg><svg style="position:absolute;left:1003px;top:934.5px;" width="24" height="24" viewBox="0 0 24 24"><path d="M12 2V22M2 12H22" stroke="#8d8d8d" stroke-width="3.2"/></svg><svg style="position:absolute;left:1041px;top:935.5px;" width="22" height="22" viewBox="0 0 32 32"><path fill="#8d8d8d" d="M13.6 0h4.8l.8 4.2a12 12 0 0 1 3 1.3l3.6-2.4 3.4 3.4-2.4 3.6a12 12 0 0 1 1.3 3l4.2.8v4.8l-4.2.8a12 12 0 0 1-1.3 3l2.4 3.6-3.4 3.4-3.6-2.4a12 12 0 0 1-3 1.3l-.8 4.2h-4.8l-.8-4.2a12 12 0 0 1-3-1.3l-3.6 2.4-3.4-3.4 2.4-3.6a12 12 0 0 1-1.3-3L0 18.4v-4.8l4.2-.8a12 12 0 0 1 1.3-3L3.1 6.2l3.4-3.4 3.6 2.4a12 12 0 0 1 3-1.3zM16 10.5a5.5 5.5 0 1 0 0 11 5.5 5.5 0 1 0 0-11z"/></svg><svg style="position:absolute;left:1079px;top:933.5px;" width="20" height="26" viewBox="0 0 20 26"><path d="M1 1h12l6 6v18H1z" fill="#8d8d8d"/><path d="M13 1v6h6" fill="#fff" opacity=".6"/><path d="M5 12l8 10M13 12l-8 10" stroke="#fff" stroke-width="2.2"/></svg><div style="position:absolute;left:66px;top:973px;width:1048px;height:1px;background:#dedede"></div><div style="position:absolute;left:66px;top:1021px;width:1048px;height:4px;background:#d6d6d6"></div><div style="position:absolute;left:114px;top:974px;width:1px;height:47px;background:#e0e0e0"></div><div style="position:absolute;left:261px;top:974px;width:1px;height:47px;background:#e0e0e0"></div><div style="position:absolute;left:409px;top:974px;width:1px;height:47px;background:#e0e0e0"></div><div style="position:absolute;left:562px;top:974px;width:1px;height:47px;background:#e0e0e0"></div><div style="position:absolute;left:710px;top:974px;width:1px;height:47px;background:#e0e0e0"></div><div style="position:absolute;left:812px;top:974px;width:1px;height:47px;background:#e0e0e0"></div><div style="position:absolute;left:917px;top:974px;width:1px;height:47px;background:#e0e0e0"></div><div style="position:absolute;left:1025px;top:974px;width:1px;height:47px;background:#e0e0e0"></div><div style="position:absolute;left:130px;top:990px;font-size:17.5px;line-height:17.5px;color:#555;font-weight:normal;white-space:nowrap;">Color</div><div style="position:absolute;left:278px;top:990px;font-size:17.5px;line-height:17.5px;color:#555;font-weight:normal;white-space:nowrap;">Task No.</div><div style="position:absolute;left:425px;top:990px;font-size:17.5px;line-height:17.5px;color:#555;font-weight:normal;white-space:nowrap;">Site From City</div><div style="position:absolute;left:579px;top:990px;font-size:17.5px;line-height:17.5px;color:#555;font-weight:normal;white-space:nowrap;">Site City</div><div style="position:absolute;left:727px;top:990px;font-size:17.5px;line-height:17.5px;color:#555;font-weight:normal;white-space:nowrap;">LM</div><div style="position:absolute;left:828px;top:990px;font-size:17.5px;line-height:17.5px;color:#555;font-weight:normal;white-space:nowrap;">LM Tot.</div><div style="position:absolute;left:933px;top:990px;font-size:17.5px;line-height:17.5px;color:#555;font-weight:normal;white-space:nowrap;">Kg</div><div style="position:absolute;left:1041px;top:990px;font-size:17.5px;line-height:17.5px;color:#555;font-weight:normal;white-space:nowrap;">Kg Tot.</div><div style="position:absolute;left:66px;top:1058px;width:1048px;height:1px;background:#dcdcdc"></div><div style="position:absolute;left:114px;top:1025px;width:1px;height:33px;background:#e2e2e2"></div><div style="position:absolute;left:261px;top:1025px;width:1px;height:33px;background:#e2e2e2"></div><div style="position:absolute;left:409px;top:1025px;width:1px;height:33px;background:#e2e2e2"></div><div style="position:absolute;left:562px;top:1025px;width:1px;height:33px;background:#e2e2e2"></div><div style="position:absolute;left:710px;top:1025px;width:1px;height:33px;background:#e2e2e2"></div><div style="position:absolute;left:812px;top:1025px;width:1px;height:33px;background:#e2e2e2"></div><div style="position:absolute;left:917px;top:1025px;width:1px;height:33px;background:#e2e2e2"></div><div style="position:absolute;left:1025px;top:1025px;width:1px;height:33px;background:#e2e2e2"></div><div style="position:absolute;left:115px;top:1026px;width:147px;height:32px;background:#e31e24"></div><div style="position:absolute;left:89px;top:1035px;font-size:17.5px;line-height:17.5px;color:#1f1f1f;font-weight:normal;white-space:nowrap;">1</div><div style="position:absolute;left:271px;top:1035px;font-size:17.5px;line-height:17.5px;color:#1f1f1f;font-weight:normal;white-space:nowrap;">TRAJ0010-L...</div><div style="position:absolute;left:418px;top:1035px;font-size:17.5px;line-height:17.5px;color:#1f1f1f;font-weight:normal;white-space:nowrap;">Namen</div><div style="position:absolute;left:571px;top:1035px;font-size:17.5px;line-height:17.5px;color:#1f1f1f;font-weight:normal;white-space:nowrap;">Zürich</div><div style="position:absolute;left:719px;top:1035px;font-size:17.5px;line-height:17.5px;color:#1f1f1f;font-weight:normal;white-space:nowrap;">8.00</div><div style="position:absolute;left:821px;top:1035px;font-size:17.5px;line-height:17.5px;color:#1f1f1f;font-weight:normal;white-space:nowrap;">8.00</div><div style="position:absolute;left:926px;top:1035px;font-size:17.5px;line-height:17.5px;color:#1f1f1f;font-weight:normal;white-space:nowrap;">800.00</div><div style="position:absolute;left:1034px;top:1035px;font-size:17.5px;line-height:17.5px;color:#1f1f1f;font-weight:normal;white-space:nowrap;">800.00</div><div style="position:absolute;left:66px;top:1092px;width:1048px;height:1px;background:#dcdcdc"></div><div style="position:absolute;left:114px;top:1059px;width:1px;height:33px;background:#e2e2e2"></div><div style="position:absolute;left:261px;top:1059px;width:1px;height:33px;background:#e2e2e2"></div><div style="position:absolute;left:409px;top:1059px;width:1px;height:33px;background:#e2e2e2"></div><div style="position:absolute;left:562px;top:1059px;width:1px;height:33px;background:#e2e2e2"></div><div style="position:absolute;left:710px;top:1059px;width:1px;height:33px;background:#e2e2e2"></div><div style="position:absolute;left:812px;top:1059px;width:1px;height:33px;background:#e2e2e2"></div><div style="position:absolute;left:917px;top:1059px;width:1px;height:33px;background:#e2e2e2"></div><div style="position:absolute;left:1025px;top:1059px;width:1px;height:33px;background:#e2e2e2"></div><div style="position:absolute;left:115px;top:1060px;width:147px;height:32px;background:#2a9e10"></div><div style="position:absolute;left:89px;top:1069px;font-size:17.5px;line-height:17.5px;color:#1f1f1f;font-weight:normal;white-space:nowrap;">2</div><div style="position:absolute;left:271px;top:1069px;font-size:17.5px;line-height:17.5px;color:#1f1f1f;font-weight:normal;white-space:nowrap;">TRAJ0010-L...</div><div style="position:absolute;left:418px;top:1069px;font-size:17.5px;line-height:17.5px;color:#1f1f1f;font-weight:normal;white-space:nowrap;">Namen</div><div style="position:absolute;left:571px;top:1069px;font-size:17.5px;line-height:17.5px;color:#1f1f1f;font-weight:normal;white-space:nowrap;">Zürich</div><div style="position:absolute;left:719px;top:1069px;font-size:17.5px;line-height:17.5px;color:#1f1f1f;font-weight:normal;white-space:nowrap;">-8.00</div><div style="position:absolute;left:821px;top:1069px;font-size:17.5px;line-height:17.5px;color:#1f1f1f;font-weight:normal;white-space:nowrap;">0.00</div><div style="position:absolute;left:926px;top:1069px;font-size:17.5px;line-height:17.5px;color:#1f1f1f;font-weight:normal;white-space:nowrap;">-800.00</div><div style="position:absolute;left:1034px;top:1069px;font-size:17.5px;line-height:17.5px;color:#1f1f1f;font-weight:normal;white-space:nowrap;">0.00</div><div style="position:absolute;left:66px;top:1093px;width:1048px;height:33px;background:#eeedf6"></div><div style="position:absolute;left:66px;top:1126px;width:1048px;height:1px;background:#dcdcdc"></div><div style="position:absolute;left:114px;top:1093px;width:1px;height:33px;background:#e2e2e2"></div><div style="position:absolute;left:261px;top:1093px;width:1px;height:33px;background:#e2e2e2"></div><div style="position:absolute;left:409px;top:1093px;width:1px;height:33px;background:#e2e2e2"></div><div style="position:absolute;left:562px;top:1093px;width:1px;height:33px;background:#e2e2e2"></div><div style="position:absolute;left:710px;top:1093px;width:1px;height:33px;background:#e2e2e2"></div><div style="position:absolute;left:812px;top:1093px;width:1px;height:33px;background:#e2e2e2"></div><div style="position:absolute;left:917px;top:1093px;width:1px;height:33px;background:#e2e2e2"></div><div style="position:absolute;left:1025px;top:1093px;width:1px;height:33px;background:#e2e2e2"></div><div style="position:absolute;left:115px;top:1094px;width:147px;height:32px;background:#e31e24"></div><div style="position:absolute;left:89px;top:1103px;font-size:17.5px;line-height:17.5px;color:#1f1f1f;font-weight:normal;white-space:nowrap;">3</div><div style="position:absolute;left:271px;top:1103px;font-size:17.5px;line-height:17.5px;color:#1f1f1f;font-weight:normal;white-space:nowrap;">TRAJ0006-L...</div><div style="position:absolute;left:418px;top:1103px;font-size:17.5px;line-height:17.5px;color:#1f1f1f;font-weight:normal;white-space:nowrap;">Kortrijk</div><div style="position:absolute;left:571px;top:1103px;font-size:17.5px;line-height:17.5px;color:#1f1f1f;font-weight:normal;white-space:nowrap;">Genève</div><div style="position:absolute;left:719px;top:1103px;font-size:17.5px;line-height:17.5px;color:#1f1f1f;font-weight:normal;white-space:nowrap;">6.00</div><div style="position:absolute;left:821px;top:1103px;font-size:17.5px;line-height:17.5px;color:#1f1f1f;font-weight:normal;white-space:nowrap;">6.00</div><div style="position:absolute;left:926px;top:1103px;font-size:17.5px;line-height:17.5px;color:#1f1f1f;font-weight:normal;white-space:nowrap;">600.00</div><div style="position:absolute;left:1034px;top:1103px;font-size:17.5px;line-height:17.5px;color:#1f1f1f;font-weight:normal;white-space:nowrap;">600.00</div><div style="position:absolute;left:66px;top:1160px;width:1048px;height:1px;background:#dcdcdc"></div><div style="position:absolute;left:114px;top:1127px;width:1px;height:33px;background:#e2e2e2"></div><div style="position:absolute;left:261px;top:1127px;width:1px;height:33px;background:#e2e2e2"></div><div style="position:absolute;left:409px;top:1127px;width:1px;height:33px;background:#e2e2e2"></div><div style="position:absolute;left:562px;top:1127px;width:1px;height:33px;background:#e2e2e2"></div><div style="position:absolute;left:710px;top:1127px;width:1px;height:33px;background:#e2e2e2"></div><div style="position:absolute;left:812px;top:1127px;width:1px;height:33px;background:#e2e2e2"></div><div style="position:absolute;left:917px;top:1127px;width:1px;height:33px;background:#e2e2e2"></div><div style="position:absolute;left:1025px;top:1127px;width:1px;height:33px;background:#e2e2e2"></div><div style="position:absolute;left:115px;top:1128px;width:147px;height:32px;background:#2a9e10"></div><div style="position:absolute;left:89px;top:1137px;font-size:17.5px;line-height:17.5px;color:#1f1f1f;font-weight:normal;white-space:nowrap;">4</div><div style="position:absolute;left:271px;top:1137px;font-size:17.5px;line-height:17.5px;color:#1f1f1f;font-weight:normal;white-space:nowrap;">TRAJ0006-L...</div><div style="position:absolute;left:418px;top:1137px;font-size:17.5px;line-height:17.5px;color:#1f1f1f;font-weight:normal;white-space:nowrap;">Kortrijk</div><div style="position:absolute;left:571px;top:1137px;font-size:17.5px;line-height:17.5px;color:#1f1f1f;font-weight:normal;white-space:nowrap;">Genève</div><div style="position:absolute;left:719px;top:1137px;font-size:17.5px;line-height:17.5px;color:#1f1f1f;font-weight:normal;white-space:nowrap;">-6.00</div><div style="position:absolute;left:821px;top:1137px;font-size:17.5px;line-height:17.5px;color:#1f1f1f;font-weight:normal;white-space:nowrap;">0.00</div><div style="position:absolute;left:926px;top:1137px;font-size:17.5px;line-height:17.5px;color:#1f1f1f;font-weight:normal;white-space:nowrap;">-600.00</div><div style="position:absolute;left:1034px;top:1137px;font-size:17.5px;line-height:17.5px;color:#1f1f1f;font-weight:normal;white-space:nowrap;">0.00</div><svg style="position:absolute;left:455px;top:1095px;" width="12" height="24" viewBox="0 0 12 24"><path d="M1 1h10M1 23h10M6 1v22" stroke="#222" stroke-width="2"/></svg><div style="position:absolute;left:67px;top:1508px;width:1046px;height:13px;background:#fafafa"></div><div style="position:absolute;left:67px;top:1508px;width:798px;height:13px;background:#eeedf5"></div><div style="position:absolute;left:66px;top:1521px;width:1048px;height:2px;background:#cfcfcf"></div><div style="position:absolute;left:1124px;top:221px;width:86px;height:30px;background:#fff;border:1px solid #d6d6d6;border-bottom:none;box-sizing:border-box"></div><div style="position:absolute;left:1139px;top:227px;font-size:17.5px;line-height:17.5px;color:#6d6d6d;font-weight:normal;white-space:nowrap;">Map</div><svg style="position:absolute;left:1187px;top:230px;" width="13" height="13" viewBox="0 0 13 13"><path d="M1 1L12 12M12 1L1 12" stroke="#b0b0b0" stroke-width="2.4"/></svg><div style="position:absolute;left:1215px;top:221px;width:122px;height:29px;background:#f4f4f4;border:1px solid #d6d6d6;border-bottom:none;box-sizing:border-box"></div><div style="position:absolute;left:1231px;top:227px;font-size:17.5px;line-height:17.5px;color:#777;font-weight:normal;white-space:nowrap;">Planning</div><svg style="position:absolute;left:1307px;top:230px;" width="13" height="13" viewBox="0 0 13 13"><path d="M1 1L12 12M12 1L1 12" stroke="#d2d2d2" stroke-width="2.4"/></svg><svg style="position:absolute;left:2734px;top:223px;" width="20" height="20" viewBox="0 0 20 20"><path d="M2 5h9M2 5v13h13V10" fill="none" stroke="#9a9a9a" stroke-width="2.4"/><path d="M8 13l1-4 9-9 3 3-9 9z" fill="#9a9a9a"/></svg><svg style="position:absolute;left:2763px;top:224px;" width="19" height="18" viewBox="0 0 19 18"><rect x="0" y="0" width="19" height="18" rx="2" fill="#9a9a9a"/><rect x="2.5" y="3" width="14" height="4" fill="#f2f2f2"/></svg><svg style="position:absolute;left:2793px;top:226px;" width="14" height="14" viewBox="0 0 14 14"><path d="M1 1L13 13M13 1L1 13" stroke="#9a9a9a" stroke-width="2.6"/></svg><svg style="position:absolute;left:1123px;top:250px" width="1696" height="1272" viewBox="1123 250 1696 1272"><defs><filter id="blur" x="-20%" y="-20%" width="140%" height="140%"><feGaussianBlur stdDeviation="10"/></filter><filter id="blurA" x="-20%" y="-20%" width="140%" height="140%"><feGaussianBlur stdDeviation="22"/></filter></defs><rect x="1123" y="250" width="1696" height="1272" fill="#fcf2e3"/><polygon points="2000.0,600.0 2150.0,540.0 2330.0,450.0 2500.0,490.0 2650.0,510.0 2880.0,550.0 2880.0,1000.0 2600.0,1000.0 2400.0,960.0 2200.0,950.0 2000.0,900.0" fill="#f8e9ca" filter="url(#blurA)"/><polygon points="1080.0,1270.0 1250.0,1285.0 1400.0,1295.0 1520.0,1312.0 1640.0,1325.0 1780.0,1340.0 1845.0,1390.0 1830.0,1440.0 1760.0,1480.0 1690.0,1560.0 1080.0,1560.0" fill="#f6e4c0" filter="url(#blurA)"/><polygon points="1740.0,1000.0 1850.0,980.0 1950.0,1000.0 2040.0,1050.0 2160.0,1100.0 2180.0,1230.0 2100.0,1260.0 1900.0,1270.0 1800.0,1270.0 1740.0,1150.0" fill="#f8e9ca" filter="url(#blurA)"/><polygon points="1950.0,780.0 2100.0,760.0 2180.0,820.0 2200.0,920.0 2080.0,1000.0 1990.0,960.0" fill="#f8e9ca" filter="url(#blurA)"/><polygon points="2300.0,1160.0 2394.0,1196.0 2458.0,1239.0 2530.0,1300.0 2600.0,1380.0 2700.0,1440.0 2690.0,1522.0 2560.0,1522.0 2480.0,1440.0 2380.0,1280.0 2290.0,1200.0" fill="#f8e9ca" filter="url(#blurA)"/><polygon points="2640.0,1080.0 2880.0,1040.0 2880.0,1320.0 2740.0,1260.0 2660.0,1170.0" fill="#f8e9ca" filter="url(#blurA)"/><polygon points="1300.0,300.0 1380.0,290.0 1420.0,380.0 1400.0,470.0 1330.0,450.0" fill="#f8e9ca" filter="url(#blurA)"/><polygon points="2050.4,1027.7 2114.8,984.8 2179.2,959.0 2222.1,924.7 2307.9,907.5 2415.2,890.3 2479.6,881.8 2565.5,890.3 2651.3,916.1 2694.2,950.4 2715.7,993.3 2651.3,1014.8 2565.5,1027.7 2501.1,1049.1 2436.7,1066.3 2372.3,1079.2 2307.9,1062.0 2243.6,1057.7 2200.6,1070.6 2157.7,1079.2 2136.3,1122.1 2157.7,1186.5 2136.3,1229.4 2093.4,1208.0 2050.4,1143.5 2041.8,1079.2" fill="#f3dcab" filter="url(#blur)"/><polygon points="1560.0,1330.0 1640.0,1325.0 1720.0,1335.0 1790.0,1350.0 1800.0,1390.0 1720.0,1400.0 1620.0,1380.0" fill="#f3dcab" filter="url(#blur)"/><polygon points="1250.0,1300.0 1380.0,1300.0 1420.0,1330.0 1340.0,1350.0 1250.0,1340.0" fill="#f3dcab" filter="url(#blur)"/><polygon points="1100.0,1340.0 1200.0,1335.0 1215.0,1400.0 1130.0,1410.0 1090.0,1380.0" fill="#f3dcab" filter="url(#blur)"/><polygon points="1390.0,1400.0 1500.0,1410.0 1560.0,1460.0 1560.0,1522.0 1400.0,1522.0" fill="#f3dcab" filter="url(#blur)"/><polygon points="1800.0,1050.0 1880.0,1040.0 1930.0,1100.0 1910.0,1200.0 1850.0,1230.0 1800.0,1170.0" fill="#f3dcab" filter="url(#blur)"/><polygon points="2420.0,1260.0 2480.0,1290.0 2560.0,1360.0 2600.0,1420.0 2570.0,1440.0 2500.0,1380.0 2430.0,1300.0" fill="#f3dcab" filter="url(#blur)"/><polygon points="2700.0,1080.0 2819.0,1060.0 2819.0,1250.0 2740.0,1200.0" fill="#f3dcab" filter="url(#blur)"/><polygon points="2522.0,693.0 2608.0,736.0 2651.0,779.0 2565.0,800.0 2501.0,757.0" fill="#f3dcab" filter="url(#blur)"/><polygon points="1123.0,250.0 2121.5,250.0 2116.6,252.9 2120.3,262.8 2130.1,272.6 2127.6,277.5 2116.6,276.3 2106.7,266.5 2101.8,260.3 2087.0,259.7 2072.3,262.8 2053.8,265.2 2035.4,268.9 2023.0,275.1 2010.7,284.9 2003.4,299.7 1968.9,312.0 1961.5,316.9 1959.1,324.3 1954.1,346.4 1951.7,364.9 1940.6,389.5 1923.9,418.5 1912.1,438.8 1892.1,450.3 1895.0,461.7 1874.9,470.3 1880.7,484.6 1866.4,496.1 1846.3,507.5 1823.4,516.1 1794.8,524.7 1766.2,533.3 1749.0,541.8 1751.9,564.7 1749.0,593.4 1751.9,616.2 1740.5,630.5 1711.8,650.0 1668.8,661.3 1651.7,680.2 1651.7,697.3 1629.4,709.4 1608.8,707.6 1583.0,702.5 1565.8,699.0 1555.5,669.9 1528.9,672.0 1515.1,665.2 1519.7,685.8 1528.9,708.7 1535.7,731.6 1538.0,754.4 1544.9,772.8 1551.8,777.3 1528.9,777.3 1515.1,772.8 1496.8,777.3 1478.5,777.3 1460.2,786.5 1448.8,777.3 1437.3,759.0 1423.6,754.4 1405.3,759.0 1387.0,770.5 1373.2,768.2 1350.4,775.0 1325.2,786.5 1320.6,800.2 1325.2,804.8 1345.8,800.2 1336.6,814.0 1345.8,823.1 1327.5,834.6 1348.1,841.4 1350.4,859.7 1368.7,857.4 1391.6,859.7 1414.4,866.6 1432.8,878.0 1455.6,882.6 1464.8,887.2 1478.5,891.8 1478.5,905.5 1492.3,914.7 1506.0,937.6 1499.1,960.0 1515.8,971.5 1533.0,991.6 1558.7,1008.7 1570.2,1025.9 1564.5,1060.2 1570.2,1077.4 1564.5,1128.9 1558.7,1171.8 1553.0,1229.0 1541.6,1272.0 1521.5,1292.0 1500.4,1295.0 1473.3,1294.1 1432.5,1286.0 1391.7,1277.8 1351.0,1283.3 1310.2,1280.5 1255.9,1272.4 1250.4,1261.5 1201.5,1267.0 1147.2,1267.0 1123.0,1250.7" fill="#a4d3e1"/><polygon points="1688.0,1522.0 1700.0,1505.4 1743.1,1485.3 1777.7,1462.2 1800.7,1450.7 1823.7,1433.5 1843.8,1413.4 1858.2,1393.2 1861.1,1378.8 1849.6,1364.5 1846.7,1335.7 1846.7,1315.6 1855.3,1301.2 1872.6,1286.8 1898.4,1272.4 1918.6,1266.7 1935.8,1272.4 1953.1,1281.0 1964.6,1286.8 1979.0,1281.0 1990.5,1286.8 2002.0,1298.3 2025.0,1304.1 2045.1,1312.7 2062.4,1318.4 2085.4,1298.3 2102.6,1281.0 2131.4,1258.0 2148.7,1246.5 2174.5,1235.0 2194.7,1214.9 2211.9,1197.7 2234.9,1186.1 2258.0,1191.9 2281.0,1203.4 2304.0,1214.9 2327.0,1232.2 2338.5,1249.4 2344.2,1281.0 2352.9,1312.7 2370.1,1327.1 2384.5,1338.6 2400.0,1367.3 2413.9,1383.6 2444.3,1395.0 2467.1,1410.2 2478.5,1425.4 2497.5,1444.4 2527.9,1467.1 2565.9,1490.0 2588.6,1522.0" fill="#a4d3e1"/><polygon points="2463.3,1091.1 2478.5,1076.0 2512.7,1064.6 2543.1,1060.8 2565.9,1076.0 2562.1,1098.7 2565.9,1121.5 2581.0,1148.1 2603.8,1102.5 2622.8,1113.9 2641.8,1132.9 2664.6,1182.3 2695.0,1212.7 2725.4,1243.1 2755.8,1265.9 2786.1,1288.6 2819.0,1315.2 2819.0,1497.0 2769.8,1490.1 2717.8,1467.1 2710.2,1448.2 2729.2,1433.0 2721.6,1417.8 2679.8,1417.8 2634.2,1402.6 2596.2,1372.2 2573.5,1334.2 2565.9,1300.0 2554.5,1265.9 2524.1,1243.1 2493.7,1224.1 2474.7,1205.1 2467.1,1182.3 2467.1,1151.9 2470.9,1125.3" fill="#a4d3e1"/><polygon points="1981.2,318.1 2002.1,307.1 2003.4,321.8 2023.0,328.0 2018.1,334.1 2016.9,350.1 2010.7,358.7 1998.4,368.6 1986.1,367.4 1981.2,356.3 1983.7,346.4 1986.1,337.8 1993.5,340.3 1986.1,324.3" fill="#a4d3e1"/><polygon points="1437.7,250.0 1643.2,250.0 1654.6,261.4 1663.2,278.6 1666.1,295.8 1657.5,307.2 1646.0,318.7 1654.6,327.3 1666.1,330.1 1677.5,315.8 1700.4,312.9 1729.0,321.5 1749.0,333.0 1757.6,350.1 1760.5,370.2 1754.8,393.1 1746.2,416.0 1731.9,427.4 1720.4,436.0 1706.1,444.6 1694.7,450.3 1697.5,456.0 1706.1,461.7 1709.0,476.0 1711.8,481.8 1734.7,487.5 1737.6,498.9 1729.0,516.1 1717.6,524.7 1706.1,536.1 1683.2,541.8 1654.6,550.4 1626.0,547.6 1597.4,553.3 1568.8,547.6 1540.2,550.4 1523.0,553.3 1495.0,567.6 1466.3,561.9 1437.7,553.3 1409.1,564.7 1397.7,604.8 1389.1,610.5 1371.9,601.9 1351.9,593.4 1323.3,604.8 1303.3,613.4 1294.7,633.4 1271.8,627.7 1260.3,622.0 1271.8,610.5 1294.7,593.4 1317.6,576.2 1329.0,559.0 1337.6,536.1 1343.3,524.7 1366.2,507.5 1403.4,507.5 1437.7,507.5 1443.5,501.8 1446.3,478.9 1437.7,473.2 1426.3,481.8 1409.1,484.6 1394.8,476.0 1380.5,461.7 1366.2,456.0 1351.9,447.4 1323.3,450.3 1309.0,458.9 1297.5,450.3 1289.0,433.1 1300.4,421.7 1323.3,410.2 1346.2,398.8 1366.2,381.6 1371.9,364.4 1369.1,341.6 1366.2,324.4 1349.0,321.5 1326.1,333.0 1329.0,324.4 1351.9,301.5 1369.1,284.3 1380.5,278.6 1406.3,275.8 1432.0,264.3" fill="#fcf2e3"/><polygon points="1123.0,250.0 1231.7,250.0 1233.2,278.6 1234.6,307.2 1228.9,335.8 1220.3,364.4 1208.8,378.8 1214.6,398.8 1191.7,395.9 1174.5,404.5 1134.4,410.2 1123.0,421.7" fill="#fcf2e3"/><polygon points="1329.0,278.6 1346.2,267.2 1363.3,272.9 1369.1,281.5 1351.9,292.9 1334.7,284.3" fill="#fcf2e3"/><polygon points="1540.2,561.9 1557.3,556.2 1568.8,561.9 1560.2,570.5 1543.0,567.6" fill="#fcf2e3"/><polygon points="2275.2,1321.3 2278.1,1344.3 2283.8,1378.8 2275.2,1422.0 2266.6,1450.7 2260.8,1468.0 2246.5,1459.4 2234.9,1436.4 2226.3,1407.6 2217.7,1387.5 2223.4,1367.3 2240.7,1353.0 2263.7,1344.3 2272.3,1327.1" fill="#f6e6c2"/><polygon points="2194.7,1522.0 2206.2,1499.7 2234.9,1493.9 2258.0,1482.4 2275.2,1482.4 2292.5,1522.0" fill="#f6e6c2"/><ellipse cx="2090" cy="993" rx="20" ry="6" fill="#a4d3e1" transform="rotate(-15 2090 993)"/><polygon points="2190,1095 2300,1075 2440,1085 2470,1140 2420,1165 2300,1160 2210,1140" fill="#fdf8ef" filter="url(#blurA)"/><line x1="2620" y1="1130" x2="2640" y2="1160" stroke="#fcf2e3" stroke-width="5" stroke-linecap="round"/><line x1="2650" y1="1165" x2="2675" y2="1190" stroke="#fcf2e3" stroke-width="5" stroke-linecap="round"/><line x1="2690" y1="1205" x2="2720" y2="1225" stroke="#fcf2e3" stroke-width="4" stroke-linecap="round"/><line x1="2725" y1="1250" x2="2760" y2="1262" stroke="#fcf2e3" stroke-width="4" stroke-linecap="round"/><line x1="2745" y1="1282" x2="2790" y2="1290" stroke="#fcf2e3" stroke-width="4" stroke-linecap="round"/><line x1="2790" y1="1300" x2="2815" y2="1310" stroke="#fcf2e3" stroke-width="4" stroke-linecap="round"/><line x1="2680" y1="1220" x2="2700" y2="1240" stroke="#fcf2e3" stroke-width="3" stroke-linecap="round"/><line x1="1990" y1="267.7" x2="2014" y2="261.5" stroke="#fcf2e3" stroke-width="4" stroke-linecap="round"/><line x1="2021" y1="259" x2="2043" y2="257.8" stroke="#fcf2e3" stroke-width="4" stroke-linecap="round"/><line x1="2054" y1="256.6" x2="2064" y2="255.4" stroke="#fcf2e3" stroke-width="4" stroke-linecap="round"/><line x1="1962" y1="309" x2="1971" y2="293" stroke="#fcf2e3" stroke-width="4" stroke-linecap="round"/><ellipse cx="2275" cy="880" rx="18" ry="6" fill="#a4d3e1" transform="rotate(25 2275 880)"/><g fill="none" stroke="#e39a90" stroke-width="1.2" opacity=".85"><path d="M1605 251 L1584 277 L1562 293 L1544 316 M1605 251 L1611 264 L1613 270 L1614 282 M1183 283 L1182 314 L1184 336 L1183 368 M1183 283 L1200 302 L1206 325 L1222 349 M1367 313 L1385 305 L1393 302 L1412 300 M1367 313 L1396 306 L1423 303 L1454 302 M1367 313 L1380 317 L1393 325 L1399 338 M1412 300 L1429 314 L1450 321 L1467 333 M1454 302 L1435 310 L1419 325 L1399 338 M1454 302 L1462 311 L1464 325 L1467 333 M1544 316 L1565 307 L1594 296 L1614 282 M1544 316 L1537 325 L1525 329 L1513 337 M1544 316 L1557 322 L1567 339 L1580 347 M1614 282 L1629 285 L1641 293 L1656 300 M1614 282 L1602 305 L1596 322 L1580 347 M2013 290 L1999 307 L1987 336 L1969 353 M2013 290 L2009 305 L2013 322 L2013 335 M2097 310 L2123 313 L2147 309 L2172 309 M2097 310 L2127 318 L2143 326 L2173 338 M2172 309 L2179 302 L2195 297 L2208 288 M2172 309 L2170 316 L2175 333 L2173 338 M2208 288 L2233 298 L2253 302 L2274 310 M2208 288 L2194 309 L2183 322 L2173 338 M2274 310 L2301 316 L2324 322 L2345 331 M2365 275 L2371 276 L2378 273 L2389 279 M2365 275 L2392 278 L2422 286 L2454 291 M2365 275 L2360 295 L2350 317 L2345 331 M2389 279 L2378 298 L2355 309 L2345 331 M2454 291 L2482 285 L2502 281 L2533 281 M2454 291 L2467 314 L2471 343 L2484 363 M2533 281 L2541 287 L2557 288 L2567 288 M2533 281 L2532 306 L2526 322 L2518 348 M2567 288 L2594 293 L2619 297 L2647 295 M2567 288 L2569 311 L2572 340 L2575 367 M2647 295 L2680 292 L2710 299 L2737 301 M2647 295 L2651 322 L2651 342 L2655 367 M2647 295 L2662 312 L2688 321 L2707 341 M2737 301 L2752 304 L2762 304 L2778 298 M2737 301 L2727 318 L2712 329 L2707 341 M2778 298 L2753 315 L2730 326 L2707 341 M2778 298 L2785 321 L2786 349 L2792 377 M1183 368 L1199 360 L1212 355 L1222 349 M1399 338 L1377 367 L1364 397 L1339 425 M1399 338 L1409 361 L1421 389 L1435 413 M1467 333 L1485 329 L1500 340 L1513 337 M1513 337 L1531 339 L1552 341 L1580 347 M1580 347 L1600 357 L1621 368 L1638 372 M1580 347 L1574 369 L1568 389 L1559 410 M1638 372 L1665 356 L1701 353 L1728 337 M1638 372 L1620 385 L1606 393 L1586 403 M1638 372 L1639 381 L1642 391 L1646 402 M1969 353 L1975 379 L1988 408 L1991 430 M2087 343 L2069 362 L2061 387 L2045 415 M2173 338 L2176 354 L2184 358 L2196 376 M2196 376 L2209 390 L2223 394 L2242 411 M2282 337 L2305 339 L2326 329 L2345 331 M2282 337 L2271 361 L2260 383 L2242 411 M2345 331 L2367 341 L2381 363 L2406 377 M2345 331 L2344 352 L2353 373 L2354 400 M2345 331 L2359 349 L2371 377 L2387 399 M2406 377 L2391 381 L2375 391 L2354 400 M2406 377 L2401 384 L2393 395 L2387 399 M2484 363 L2498 359 L2504 349 L2518 348 M2484 363 L2487 389 L2484 409 L2486 431 M2484 363 L2497 387 L2501 408 L2512 432 M2518 348 L2535 356 L2556 364 L2575 367 M2575 367 L2586 381 L2598 404 L2614 424 M2655 367 L2675 362 L2684 353 L2707 341 M2655 367 L2655 385 L2647 405 L2646 418 M2655 367 L2671 380 L2681 380 L2697 393 M2707 341 L2707 355 L2703 379 L2697 393 M2792 377 L2796 394 L2797 405 L2800 423 M2792 377 L2797 410 L2796 432 L2798 466 M1339 425 L1374 419 L1403 421 L1435 413 M1435 413 L1443 436 L1455 455 L1468 476 M1496 439 L1517 426 L1533 425 L1559 410 M1496 439 L1483 453 L1480 460 L1468 476 M1496 439 L1509 459 L1521 473 L1541 497 M1496 439 L1495 467 L1488 492 L1483 523 M1559 410 L1567 412 L1579 408 L1586 403 M1646 402 L1647 428 L1660 453 L1661 480 M1991 430 L1992 444 L1985 465 L1982 481 M1991 430 L2004 445 L2013 459 L2025 479 M2045 415 L2061 417 L2063 422 L2080 430 M2045 415 L2042 440 L2035 453 L2025 479 M2080 430 L2088 455 L2093 469 L2098 492 M2149 430 L2168 439 L2185 451 L2207 467 M2242 411 L2248 422 L2261 424 L2276 437 M2276 437 L2253 443 L2235 461 L2207 467 M2276 437 L2282 449 L2291 464 L2294 478 M2354 400 L2361 397 L2371 402 L2387 399 M2486 431 L2464 449 L2444 457 L2425 475 M2512 432 L2503 449 L2483 462 L2472 478 M2512 432 L2515 447 L2522 473 L2530 487 M2614 424 L2608 440 L2602 456 L2589 480 M2646 418 L2661 406 L2675 405 L2697 393 M2800 423 L2796 437 L2803 449 L2798 466 M1468 476 L1469 487 L1479 507 L1483 523 M1541 497 L1556 499 L1579 501 L1595 498 M1541 497 L1519 501 L1505 513 L1483 523 M1595 498 L1612 495 L1637 489 L1661 480 M1595 498 L1615 507 L1640 525 L1656 539 M1893 477 L1921 479 L1947 480 L1982 481 M1893 477 L1878 491 L1865 517 L1848 532 M1982 481 L2000 485 L2010 480 L2025 479 M2025 479 L2030 495 L2027 518 L2036 537 M2098 492 L2111 490 L2120 488 L2138 481 M2098 492 L2085 501 L2081 518 L2072 532 M2138 481 L2157 475 L2180 473 L2207 467 M2138 481 L2143 501 L2157 517 L2163 541 M2294 478 L2316 481 L2328 490 L2346 490 M2294 478 L2303 499 L2317 510 L2324 529 M2346 490 L2337 502 L2336 519 L2324 529 M2346 490 L2361 515 L2366 532 L2383 553 M2425 475 L2445 474 L2455 479 L2472 478 M2472 478 L2488 486 L2513 489 L2530 487 M2472 478 L2470 497 L2465 503 L2456 522 M2530 487 L2547 487 L2566 483 L2589 480 M2530 487 L2529 509 L2527 534 L2525 560 M2589 480 L2607 484 L2632 489 L2652 499 M2589 480 L2599 496 L2598 511 L2606 528 M2652 499 L2672 494 L2696 495 L2725 496 M2652 499 L2635 506 L2618 519 L2606 528 M2652 499 L2648 520 L2643 536 L2636 560 M2725 496 L2748 487 L2774 476 L2798 466 M2725 496 L2720 511 L2721 530 L2718 550 M2725 496 L2730 502 L2750 508 L2757 519 M2798 466 L2785 482 L2776 499 L2757 519 M1365 559 L1332 578 L1303 595 L1268 619 M1365 559 L1364 573 L1351 581 L1349 594 M1396 550 L1427 542 L1457 535 L1483 523 M1396 550 L1383 567 L1368 579 L1349 594 M1769 537 L1781 556 L1788 578 L1797 592 M1769 537 L1794 556 L1824 571 L1847 587 M1848 532 L1863 532 L1881 530 L1894 531 M1848 532 L1848 549 L1845 571 L1847 587 M1894 531 L1898 548 L1895 567 L1902 579 M1982 517 L2003 527 L2022 527 L2036 537 M1982 517 L1978 532 L1962 558 L1959 579 M2036 537 L2052 538 L2060 539 L2072 532 M2036 537 L2039 561 L2040 580 L2044 604 M2163 541 L2173 547 L2187 556 L2198 563 M2163 541 L2173 554 L2172 570 L2178 583 M2198 563 L2190 570 L2188 573 L2178 583 M2198 563 L2215 578 L2222 583 L2234 599 M2295 563 L2306 555 L2319 544 L2324 529 M2295 563 L2306 577 L2324 587 L2338 602 M2324 529 L2345 532 L2362 548 L2383 553 M2383 553 L2370 565 L2351 589 L2338 602 M2456 522 L2481 532 L2502 548 L2525 560 M2525 560 L2531 576 L2539 593 L2539 609 M2606 528 L2613 539 L2629 550 L2636 560 M2606 528 L2610 542 L2626 563 L2632 584 M2636 560 L2618 568 L2601 579 L2586 595 M2718 550 L2735 540 L2749 529 L2757 519 M2718 550 L2708 566 L2707 595 L2694 614 M2718 550 L2738 565 L2747 575 L2765 586 M2757 519 L2760 545 L2760 562 L2765 586 M1268 619 L1292 609 L1325 603 L1349 594 M1797 592 L1811 587 L1829 585 L1847 587 M1797 592 L1783 613 L1770 632 L1761 653 M1847 587 L1864 580 L1879 585 L1902 579 M1902 579 L1895 603 L1888 619 L1887 641 M1959 579 L1963 599 L1959 629 L1962 651 M2044 604 L2061 600 L2072 602 L2080 601 M2044 604 L2041 621 L2042 642 L2037 665 M2178 583 L2200 584 L2215 594 L2234 599 M2234 599 L2252 604 L2267 612 L2281 618 M2234 599 L2226 613 L2217 640 L2214 656 M2281 618 L2301 609 L2319 606 L2338 602 M2338 602 L2329 615 L2315 636 L2304 647 M2414 625 L2396 642 L2373 654 L2354 671 M2414 625 L2406 641 L2397 660 L2383 680 M2459 618 L2482 611 L2516 614 L2539 609 M2459 618 L2464 631 L2473 649 L2486 670 M2539 609 L2554 628 L2564 643 L2574 665 M2586 595 L2603 590 L2611 591 L2632 584 M2694 614 L2715 601 L2744 592 L2765 586 M2694 614 L2709 631 L2720 656 L2730 680 M1709 664 L1729 658 L1739 661 L1761 653 M1709 664 L1701 683 L1687 700 L1672 714 M1709 664 L1706 676 L1707 697 L1703 715 M1761 653 L1787 651 L1807 652 L1827 659 M1761 653 L1776 670 L1785 696 L1796 712 M1827 659 L1847 651 L1862 646 L1887 641 M1827 659 L1814 675 L1803 696 L1796 712 M1887 641 L1909 642 L1936 647 L1962 651 M1887 641 L1893 665 L1905 690 L1909 720 M2037 665 L2062 668 L2083 672 L2107 672 M2107 672 L2113 691 L2131 696 L2140 714 M2167 682 L2187 674 L2194 665 L2214 656 M2167 682 L2155 693 L2144 708 L2140 714 M2167 682 L2190 698 L2211 702 L2231 717 M2214 656 L2216 671 L2228 699 L2231 717 M2354 671 L2367 672 L2372 677 L2383 680 M2354 671 L2347 683 L2328 701 L2322 715 M2383 680 L2396 700 L2407 721 L2413 735 M2540 679 L2540 697 L2536 708 L2530 724 M2540 679 L2558 689 L2572 696 L2589 708 M2574 665 L2581 682 L2588 690 L2589 708 M2653 680 L2630 689 L2616 702 L2589 708 M2730 680 L2748 682 L2762 682 L2781 683 M2730 680 L2710 692 L2690 699 L2672 712 M2730 680 L2739 693 L2746 708 L2754 724 M2781 683 L2767 703 L2749 722 L2738 747 M1537 728 L1558 738 L1577 753 L1598 765 M1672 714 L1687 731 L1704 760 L1721 778 M1703 715 L1711 738 L1711 762 L1721 778 M1796 712 L1813 727 L1836 733 L1859 749 M1859 749 L1850 769 L1844 789 L1838 804 M1909 720 L1931 724 L1952 732 L1970 735 M1970 735 L1991 732 L2022 737 L2046 732 M1970 735 L1971 747 L1977 758 L1987 770 M2102 706 L2111 712 L2124 712 L2140 714 M2140 714 L2146 736 L2144 763 L2151 783 M2231 717 L2250 715 L2271 703 L2284 703 M2284 703 L2294 710 L2311 710 L2322 715 M2322 715 L2322 735 L2328 753 L2332 766 M2413 735 L2430 727 L2451 726 L2475 716 M2413 735 L2400 755 L2394 780 L2386 804 M2475 716 L2492 717 L2506 722 L2530 724 M2530 724 L2527 739 L2519 759 L2517 777 M2672 712 L2694 726 L2719 738 L2738 747 M2738 747 L2745 738 L2746 735 L2754 724 M2738 747 L2741 767 L2733 787 L2733 803 M2738 747 L2753 768 L2766 788 L2783 808 M1373 770 L1387 775 L1408 787 L1428 788 M1373 770 L1381 798 L1398 817 L1412 842 M1428 788 L1448 788 L1467 793 L1494 798 M1428 788 L1412 803 L1395 816 L1371 832 M1428 788 L1424 802 L1414 825 L1412 842 M1524 807 L1501 823 L1487 840 L1465 861 M1598 765 L1613 777 L1625 776 L1637 788 M1598 765 L1605 788 L1600 812 L1606 840 M1637 788 L1631 806 L1621 820 L1606 840 M1637 788 L1648 808 L1654 827 L1664 845 M1721 778 L1732 778 L1747 781 L1768 781 M1768 781 L1795 789 L1819 792 L1838 804 M1838 804 L1844 811 L1847 825 L1847 837 M1885 800 L1873 813 L1861 825 L1847 837 M1987 770 L1984 788 L1977 814 L1969 833 M1987 770 L1996 792 L2012 809 L2018 830 M2053 798 L2074 796 L2090 780 L2114 778 M2053 798 L2043 812 L2029 824 L2018 830 M2114 778 L2126 780 L2135 786 L2151 783 M2151 783 L2144 804 L2144 824 L2144 838 M2243 792 L2255 788 L2267 787 L2274 785 M2243 792 L2263 806 L2278 823 L2293 846 M2274 785 L2292 782 L2308 773 L2332 766 M2274 785 L2285 809 L2288 822 L2293 846 M2332 766 L2348 778 L2365 788 L2386 804 M2386 804 L2372 818 L2360 832 L2339 851 M2386 804 L2387 820 L2398 827 L2399 842 M2386 804 L2409 814 L2424 827 L2446 839 M2457 809 L2473 800 L2497 787 L2517 777 M2457 809 L2442 817 L2423 830 L2399 842 M2457 809 L2457 816 L2453 834 L2446 839 M2517 777 L2524 791 L2544 808 L2551 832 M2592 773 L2606 788 L2624 794 L2647 810 M2592 773 L2574 791 L2569 814 L2551 832 M2647 810 L2659 814 L2660 830 L2670 836 M2733 803 L2724 811 L2713 823 L2704 838 M2733 803 L2743 820 L2759 828 L2772 847 M2783 808 L2780 825 L2774 831 L2772 847 M1371 832 L1389 838 L1396 836 L1412 842 M1412 842 L1425 844 L1447 854 L1465 861 M1465 861 L1475 869 L1489 888 L1498 900 M1465 861 L1483 875 L1505 888 L1518 895 M1560 838 L1574 837 L1590 845 L1606 840 M1606 840 L1626 846 L1642 845 L1664 845 M1606 840 L1602 864 L1598 897 L1600 921 M1664 845 L1682 837 L1694 836 L1707 834 M1707 834 L1729 844 L1754 852 L1771 869 M1771 869 L1800 859 L1822 853 L1847 837 M1771 869 L1759 890 L1743 908 L1730 925 M1771 869 L1775 885 L1781 897 L1783 914 M1929 874 L1942 857 L1956 844 L1969 833 M1929 874 L1918 895 L1907 912 L1896 932 M1929 874 L1941 888 L1961 893 L1978 903 M1969 833 L1988 829 L1998 834 L2018 830 M2087 830 L2102 847 L2120 874 L2138 891 M2144 838 L2142 852 L2139 878 L2138 891 M2222 869 L2223 883 L2221 897 L2220 916 M2222 869 L2238 877 L2253 885 L2276 899 M2293 846 L2304 844 L2325 847 L2339 851 M2293 846 L2285 867 L2277 882 L2276 899 M2339 851 L2356 847 L2382 846 L2399 842 M2339 851 L2337 863 L2343 878 L2348 889 M2399 842 L2414 843 L2433 839 L2446 839 M2399 842 L2383 862 L2362 877 L2348 889 M2399 842 L2397 866 L2395 883 L2395 910 M2551 832 L2563 840 L2578 852 L2591 856 M2591 856 L2572 875 L2562 892 L2547 911 M2591 856 L2586 870 L2587 884 L2578 900 M2670 836 L2682 840 L2694 840 L2704 838 M2670 836 L2677 856 L2694 874 L2706 889 M2704 838 L2700 857 L2706 867 L2706 889 M2772 847 L2776 871 L2771 897 L2777 920 M1498 900 L1514 920 L1529 945 L1552 961 M1518 895 L1527 915 L1538 942 L1552 961 M1600 921 L1584 933 L1564 945 L1552 961 M1682 923 L1698 922 L1713 924 L1730 925 M1682 923 L1671 950 L1659 975 L1651 996 M1682 923 L1691 933 L1709 946 L1723 959 M1730 925 L1746 919 L1768 916 L1783 914 M1730 925 L1731 937 L1725 952 L1723 959 M1783 914 L1800 914 L1812 919 L1825 926 M1783 914 L1780 936 L1776 953 L1772 970 M1825 926 L1846 925 L1875 926 L1896 932 M1825 926 L1804 936 L1786 958 L1772 970 M1896 932 L1894 946 L1891 960 L1892 969 M1978 903 L1987 897 L2004 896 L2015 900 M1978 903 L1988 916 L2004 934 L2016 952 M2015 900 L2018 922 L2014 930 L2016 952 M2102 922 L2115 909 L2126 898 L2138 891 M2102 922 L2095 936 L2085 949 L2074 969 M2220 916 L2235 915 L2262 909 L2276 899 M2220 916 L2221 941 L2229 970 L2230 998 M2276 899 L2280 921 L2296 944 L2302 966 M2348 889 L2359 892 L2377 907 L2395 910 M2395 910 L2400 928 L2405 938 L2417 952 M2489 919 L2507 921 L2529 909 L2547 911 M2489 919 L2484 933 L2482 948 L2475 968 M2489 919 L2498 930 L2512 946 L2523 966 M2547 911 L2560 908 L2567 899 L2578 900 M2547 911 L2553 925 L2562 938 L2575 950 M2578 900 L2576 918 L2573 930 L2575 950 M2675 922 L2660 940 L2650 952 L2642 967 M2675 922 L2692 933 L2713 945 L2737 956 M1552 961 L1568 969 L1577 979 L1586 987 M1651 996 L1641 1002 L1631 1017 L1619 1024 M1723 959 L1740 965 L1758 965 L1772 970 M1723 959 L1720 985 L1713 1007 L1715 1025 M1855 996 L1866 983 L1877 980 L1892 969 M1855 996 L1868 1010 L1890 1018 L1900 1025 M1892 969 L1914 981 L1939 990 L1957 997 M1957 997 L1941 1005 L1916 1020 L1900 1025 M1957 997 L1956 1010 L1954 1035 L1947 1048 M2016 952 L2037 961 L2057 964 L2074 969 M2074 969 L2070 996 L2064 1015 L2053 1042 M2074 969 L2088 988 L2098 1003 L2116 1013 M2176 992 L2191 998 L2209 993 L2230 998 M2176 992 L2154 999 L2141 1008 L2116 1013 M2176 992 L2165 1009 L2158 1022 L2144 1035 M2230 998 L2237 1017 L2233 1039 L2241 1058 M2302 966 L2310 971 L2315 988 L2328 995 M2302 966 L2294 985 L2283 1001 L2276 1024 M2328 995 L2314 1006 L2291 1010 L2276 1024 M2417 952 L2438 952 L2458 959 L2475 968 M2417 952 L2424 973 L2420 1001 L2426 1021 M2475 968 L2495 966 L2507 971 L2523 966 M2523 966 L2545 958 L2561 952 L2575 950 M2523 966 L2525 990 L2542 1020 L2544 1049 M2575 950 L2595 954 L2616 962 L2642 967 M2642 967 L2643 986 L2648 1012 L2644 1029 M2737 956 L2753 959 L2778 963 L2799 960 M2737 956 L2736 977 L2730 996 L2729 1016 M1619 1024 L1640 1036 L1655 1044 L1673 1055 M1673 1055 L1691 1047 L1703 1031 L1715 1025 M1673 1055 L1668 1068 L1674 1068 L1669 1080 M1715 1025 L1724 1041 L1730 1069 L1739 1088 M1807 1042 L1814 1046 L1824 1045 L1836 1046 M1807 1042 L1806 1060 L1798 1077 L1788 1092 M1900 1025 L1897 1041 L1896 1064 L1897 1086 M2053 1042 L2072 1032 L2091 1021 L2116 1013 M2053 1042 L2046 1063 L2040 1071 L2037 1090 M2116 1013 L2125 1024 L2136 1030 L2144 1035 M2144 1035 L2145 1054 L2153 1069 L2157 1085 M2241 1058 L2255 1044 L2262 1040 L2276 1024 M2276 1024 L2300 1029 L2316 1036 L2340 1036 M2276 1024 L2283 1038 L2295 1063 L2305 1079 M2340 1036 L2327 1053 L2313 1062 L2305 1079 M2426 1021 L2449 1031 L2464 1041 L2482 1047 M2426 1021 L2436 1045 L2437 1064 L2445 1088 M2482 1047 L2501 1045 L2527 1049 L2544 1049 M2544 1049 L2561 1042 L2582 1037 L2596 1028 M2596 1028 L2611 1029 L2626 1032 L2644 1029 M2596 1028 L2605 1049 L2609 1079 L2614 1102 M2644 1029 L2638 1057 L2627 1081 L2614 1102 M2644 1029 L2658 1046 L2666 1073 L2674 1092 M2729 1016 L2737 1022 L2752 1040 L2762 1048 M2729 1016 L2727 1039 L2727 1070 L2733 1096 M2762 1048 L2756 1062 L2745 1075 L2733 1096 M2762 1048 L2762 1064 L2766 1086 L2765 1111 M1611 1115 L1615 1126 L1610 1147 L1613 1162 M1669 1080 L1696 1086 L1716 1081 L1739 1088 M1669 1080 L1655 1100 L1649 1116 L1640 1141 M1739 1088 L1758 1090 L1771 1091 L1788 1092 M1788 1092 L1787 1112 L1795 1127 L1792 1140 M1897 1086 L1915 1098 L1937 1106 L1954 1116 M1897 1086 L1896 1106 L1900 1125 L1905 1150 M1954 1116 L1954 1139 L1961 1164 L1962 1182 M2037 1090 L2030 1109 L2032 1140 L2024 1163 M2090 1122 L2110 1108 L2131 1099 L2157 1085 M2090 1122 L2087 1128 L2086 1143 L2088 1156 M2234 1105 L2230 1118 L2225 1136 L2212 1145 M2234 1105 L2253 1122 L2268 1128 L2292 1146 M2305 1079 L2317 1087 L2327 1097 L2342 1113 M2305 1079 L2303 1105 L2301 1122 L2292 1146 M2342 1113 L2332 1136 L2326 1152 L2319 1179 M2421 1118 L2432 1108 L2432 1102 L2445 1088 M2421 1118 L2410 1135 L2409 1160 L2401 1175 M2421 1118 L2436 1135 L2446 1162 L2462 1178 M2614 1102 L2630 1100 L2650 1092 L2674 1092 M2674 1092 L2683 1112 L2688 1140 L2695 1166 M2733 1096 L2746 1098 L2756 1108 L2765 1111 M2733 1096 L2742 1121 L2759 1134 L2771 1160 M2765 1111 L2772 1125 L2768 1146 L2771 1160 M1613 1162 L1623 1158 L1626 1144 L1640 1141 M1613 1162 L1597 1179 L1571 1203 L1556 1228 M1613 1162 L1611 1178 L1618 1192 L1615 1206 M1718 1162 L1718 1184 L1721 1217 L1718 1239 M1792 1140 L1800 1153 L1818 1163 L1831 1169 M1831 1169 L1821 1180 L1810 1189 L1801 1207 M1905 1150 L1925 1157 L1942 1167 L1962 1182 M1905 1150 L1907 1170 L1904 1196 L1910 1216 M1962 1182 L1986 1172 L2002 1168 L2024 1163 M1962 1182 L1955 1187 L1958 1201 L1953 1210 M2024 1163 L2045 1160 L2067 1160 L2088 1156 M2024 1163 L2033 1192 L2041 1218 L2044 1241 M2088 1156 L2112 1167 L2149 1174 L2174 1184 M2088 1156 L2080 1183 L2078 1204 L2073 1225 M2088 1156 L2113 1169 L2140 1181 L2169 1200 M2174 1184 L2192 1173 L2204 1161 L2212 1145 M2174 1184 L2178 1192 L2169 1192 L2169 1200 M2212 1145 L2193 1161 L2188 1186 L2169 1200 M2292 1146 L2304 1160 L2314 1171 L2319 1179 M2319 1179 L2325 1194 L2337 1203 L2349 1213 M2401 1175 L2422 1181 L2438 1178 L2462 1178 M2401 1175 L2402 1196 L2400 1213 L2401 1226 M2462 1178 L2467 1191 L2460 1210 L2463 1230 M2695 1166 L2705 1191 L2719 1214 L2728 1235 M1556 1228 L1573 1225 L1596 1214 L1615 1206 M1615 1206 L1630 1205 L1651 1204 L1675 1209 M1718 1239 L1699 1257 L1687 1280 L1672 1299 M1718 1239 L1717 1257 L1716 1282 L1708 1307 M1801 1207 L1807 1214 L1820 1217 L1833 1217 M1833 1217 L1846 1232 L1851 1248 L1867 1268 M1910 1216 L1892 1229 L1886 1249 L1867 1268 M1910 1216 L1924 1234 L1932 1251 L1950 1277 M2044 1241 L2042 1253 L2043 1257 L2045 1268 M2073 1225 L2061 1236 L2052 1252 L2045 1268 M2349 1213 L2368 1217 L2387 1217 L2401 1226 M2349 1213 L2360 1233 L2367 1246 L2383 1269 M2401 1226 L2392 1243 L2390 1258 L2383 1269 M2463 1230 L2463 1251 L2459 1280 L2451 1305 M2728 1235 L2740 1230 L2756 1212 L2775 1207 M2728 1235 L2754 1252 L2774 1265 L2795 1287 M1145 1281 L1159 1301 L1159 1316 L1171 1341 M1145 1281 L1177 1294 L1208 1319 L1241 1335 M1362 1297 L1359 1322 L1353 1341 L1344 1359 M1362 1297 L1382 1305 L1391 1320 L1410 1330 M1559 1267 L1553 1291 L1555 1316 L1552 1334 M1616 1308 L1636 1300 L1658 1299 L1672 1299 M1616 1308 L1613 1333 L1609 1353 L1606 1369 M1616 1308 L1629 1326 L1645 1343 L1665 1354 M1672 1299 L1681 1306 L1694 1303 L1708 1307 M1672 1299 L1672 1312 L1666 1332 L1665 1354 M1672 1299 L1681 1308 L1697 1314 L1714 1322 M1708 1307 L1736 1303 L1756 1303 L1785 1306 M1708 1307 L1707 1308 L1712 1318 L1714 1322 M1708 1307 L1722 1312 L1741 1323 L1763 1329 M1785 1306 L1760 1315 L1740 1320 L1714 1322 M1785 1306 L1775 1318 L1769 1317 L1763 1329 M1950 1277 L1978 1269 L2011 1269 L2045 1268 M2343 1275 L2360 1272 L2370 1274 L2383 1269 M2451 1305 L2481 1304 L2504 1301 L2538 1303 M2451 1305 L2466 1325 L2490 1333 L2510 1353 M2538 1303 L2508 1309 L2482 1321 L2455 1329 M2538 1303 L2524 1322 L2520 1335 L2510 1353 M1171 1341 L1197 1334 L1217 1339 L1241 1335 M1171 1341 L1184 1360 L1198 1389 L1205 1410 M1241 1335 L1264 1344 L1285 1344 L1313 1350 M1241 1335 L1260 1352 L1272 1373 L1284 1395 M1313 1350 L1326 1349 L1331 1353 L1344 1359 M1344 1359 L1367 1354 L1389 1339 L1410 1330 M1344 1359 L1324 1368 L1305 1378 L1284 1395 M1344 1359 L1336 1378 L1339 1403 L1330 1421 M1410 1330 L1438 1326 L1458 1330 L1487 1324 M1487 1324 L1487 1348 L1488 1366 L1496 1391 M1552 1334 L1572 1351 L1583 1353 L1606 1369 M1552 1334 L1539 1349 L1514 1372 L1496 1391 M1606 1369 L1600 1380 L1603 1401 L1599 1415 M1665 1354 L1673 1367 L1668 1376 L1676 1392 M1714 1322 L1729 1327 L1743 1330 L1763 1329 M2455 1329 L2469 1338 L2488 1347 L2510 1353 M2455 1329 L2466 1353 L2468 1384 L2481 1409 M2510 1353 L2496 1368 L2491 1386 L2481 1409 M2510 1353 L2510 1371 L2514 1394 L2518 1415 M1124 1419 L1129 1424 L1140 1423 L1153 1427 M1124 1419 L1153 1417 L1182 1410 L1205 1410 M1124 1419 L1135 1440 L1139 1463 L1152 1490 M1153 1427 L1173 1424 L1192 1419 L1205 1410 M1205 1410 L1210 1433 L1220 1460 L1233 1479 M1284 1395 L1299 1401 L1311 1413 L1330 1421 M1330 1421 L1315 1444 L1308 1466 L1297 1493 M1330 1421 L1334 1441 L1343 1466 L1350 1486 M1390 1410 L1399 1435 L1416 1465 L1422 1487 M1523 1413 L1553 1418 L1570 1414 L1599 1415 M1523 1413 L1504 1431 L1492 1461 L1472 1481 M1676 1392 L1691 1394 L1699 1393 L1714 1398 M1676 1392 L1710 1400 L1731 1417 L1763 1427 M1676 1392 L1690 1410 L1700 1430 L1706 1447 M1714 1398 L1716 1411 L1712 1429 L1706 1447 M1763 1427 L1742 1433 L1730 1437 L1706 1447 M2613 1394 L2611 1426 L2607 1459 L2597 1486 M2613 1394 L2632 1419 L2641 1436 L2659 1460 M1152 1490 L1178 1485 L1202 1480 L1233 1479 M1233 1479 L1253 1485 L1279 1491 L1297 1493 M1297 1493 L1318 1494 L1337 1491 L1350 1486 M1350 1486 L1377 1484 L1399 1486 L1422 1487 M1422 1487 L1435 1485 L1454 1486 L1472 1481 M1472 1481 L1498 1478 L1521 1464 L1540 1461 M1540 1461 L1558 1468 L1571 1466 L1585 1476 M1585 1476 L1604 1480 L1620 1488 L1641 1490 M1641 1490 L1649 1500 L1663 1504 L1678 1512 M1706 1447 L1700 1473 L1686 1492 L1678 1512 M2260 1488 L2243 1502 L2228 1506 L2209 1518 M2597 1486 L2619 1473 L2639 1472 L2659 1460 M2659 1460 L2668 1472 L2668 1494 L2672 1512 M2696 1451 L2687 1467 L2680 1494 L2672 1512 M2696 1451 L2722 1479 L2739 1496 L2763 1521 M1601 1518 L1631 1513 L1650 1513 L1678 1512 M2734 1509 L2747 1513 L2756 1520 L2763 1521"/></g><g fill="none" stroke="#b9b2b0" stroke-width="1.3" opacity=".8"><path d="M1605 251 L1618 271 L1640 286 L1656 300 M1412 300 L1431 303 L1442 300 L1454 302 M1412 300 L1409 308 L1400 324 L1399 338 M2013 290 L2044 295 L2069 308 L2097 310 M2097 310 L2091 323 L2090 334 L2087 343 M2172 309 L2177 334 L2187 350 L2196 376 M2274 310 L2280 319 L2278 328 L2282 337 M2389 279 L2406 286 L2436 290 L2454 291 M2567 288 L2548 305 L2531 327 L2518 348 M1580 347 L1579 367 L1583 387 L1586 403 M1728 337 L1706 354 L1675 375 L1646 402 M1969 353 L1987 348 L2002 341 L2013 335 M2013 335 L2037 334 L2064 337 L2087 343 M1435 413 L1455 422 L1476 427 L1496 439 M1586 403 L1603 398 L1623 399 L1646 402 M1991 430 L2013 420 L2028 419 L2045 415 M2080 430 L2105 432 L2130 426 L2149 430 M2149 430 L2148 443 L2140 461 L2138 481 M2242 411 L2227 434 L2222 452 L2207 467 M2486 431 L2491 435 L2501 430 L2512 432 M2486 431 L2480 450 L2473 467 L2472 478 M2614 424 L2629 418 L2633 424 L2646 418 M2800 423 L2782 452 L2774 488 L2757 519 M1661 480 L1657 496 L1661 518 L1656 539 M1893 477 L1892 497 L1893 515 L1894 531 M1982 481 L1982 488 L1986 502 L1982 517 M2025 479 L2006 489 L1999 499 L1982 517 M2425 475 L2435 486 L2445 506 L2456 522 M1365 559 L1372 552 L1389 553 L1396 550 M1769 537 L1797 539 L1817 537 L1848 532 M1848 532 L1866 547 L1880 561 L1902 579 M2072 532 L2073 559 L2079 578 L2080 601 M2295 563 L2287 579 L2286 599 L2281 618 M2525 560 L2542 568 L2568 579 L2586 595 M2636 560 L2635 567 L2633 575 L2632 584 M1847 587 L1858 601 L1871 620 L1887 641 M1902 579 L1922 577 L1936 581 L1959 579 M2080 601 L2090 623 L2095 649 L2107 672 M2281 618 L2286 623 L2294 635 L2304 647 M2414 625 L2433 626 L2440 618 L2459 618 M2539 609 L2553 599 L2568 601 L2586 595 M2632 584 L2650 589 L2677 605 L2694 614 M1962 651 L1985 659 L2012 663 L2037 665 M2037 665 L2036 685 L2041 706 L2046 732 M2107 672 L2125 672 L2149 678 L2167 682 M2107 672 L2104 683 L2102 691 L2102 706 M2304 647 L2317 656 L2340 667 L2354 671 M2304 647 L2301 669 L2293 682 L2284 703 M2486 670 L2504 670 L2520 677 L2540 679 M2486 670 L2484 682 L2478 705 L2475 716 M2540 679 L2547 674 L2559 672 L2574 665 M2653 680 L2678 681 L2702 677 L2730 680 M2653 680 L2664 695 L2667 704 L2672 712 M2730 680 L2728 699 L2737 724 L2738 747 M2781 683 L2773 693 L2767 708 L2754 724 M1672 714 L1683 710 L1692 715 L1703 715 M1796 712 L1787 737 L1774 760 L1768 781 M1859 749 L1872 738 L1887 731 L1909 720 M1859 749 L1871 766 L1880 786 L1885 800 M2046 732 L2060 727 L2085 712 L2102 706 M2046 732 L2048 757 L2052 772 L2053 798 M2231 717 L2231 742 L2243 770 L2243 792 M2530 724 L2545 718 L2574 709 L2589 708 M2589 708 L2591 730 L2595 756 L2592 773 M1373 770 L1371 788 L1369 810 L1371 832 M1494 798 L1502 804 L1513 808 L1524 807 M1494 798 L1484 823 L1473 837 L1465 861 M1524 807 L1533 818 L1551 829 L1560 838 M1721 778 L1716 798 L1709 815 L1707 834 M1838 804 L1856 801 L1865 798 L1885 800 M2053 798 L2067 805 L2071 816 L2087 830 M2114 778 L2102 792 L2099 817 L2087 830 M2647 810 L2661 819 L2682 828 L2704 838 M2733 803 L2745 809 L2765 810 L2783 808 M1560 838 L1545 856 L1529 881 L1518 895 M2018 830 L2019 857 L2020 880 L2015 900 M2087 830 L2105 836 L2128 832 L2144 838 M2222 869 L2245 861 L2272 856 L2293 846 M2704 838 L2723 838 L2745 847 L2772 847 M1498 900 L1505 903 L1514 901 L1518 895 M1600 921 L1598 946 L1588 961 L1586 987 M1730 925 L1748 935 L1757 956 L1772 970 M2015 900 L2040 911 L2070 918 L2102 922 M2675 922 L2684 914 L2699 900 L2706 889 M2777 920 L2762 929 L2750 941 L2737 956 M2777 920 L2782 937 L2792 950 L2799 960 M1586 987 L1605 992 L1625 990 L1651 996 M1586 987 L1596 999 L1606 1015 L1619 1024 M1651 996 L1654 1013 L1666 1040 L1673 1055 M1855 996 L1845 1011 L1839 1026 L1836 1046 M1892 969 L1892 989 L1901 1009 L1900 1025 M2230 998 L2244 1007 L2263 1018 L2276 1024 M2328 995 L2334 1008 L2337 1025 L2340 1036 M2799 960 L2780 978 L2751 1002 L2729 1016 M1807 1042 L1829 1058 L1843 1067 L1858 1084 M1836 1046 L1844 1062 L1854 1069 L1858 1084 M1900 1025 L1916 1037 L1928 1043 L1947 1048 M1947 1048 L1935 1058 L1912 1077 L1897 1086 M2241 1058 L2236 1075 L2234 1092 L2234 1105 M2482 1047 L2471 1065 L2454 1073 L2445 1088 M1611 1115 L1626 1103 L1650 1095 L1669 1080 M1611 1115 L1619 1124 L1627 1135 L1640 1141 M1858 1084 L1869 1089 L1880 1085 L1897 1086 M1954 1116 L1938 1127 L1919 1140 L1905 1150 M2037 1090 L2059 1104 L2074 1113 L2090 1122 M2157 1085 L2186 1091 L2204 1095 L2234 1105 M2342 1113 L2324 1127 L2312 1131 L2292 1146 M2674 1092 L2694 1094 L2715 1094 L2733 1096 M1718 1162 L1740 1152 L1762 1150 L1792 1140 M1718 1162 L1708 1180 L1686 1196 L1675 1209 M1792 1140 L1796 1163 L1801 1180 L1801 1207 M1831 1169 L1827 1188 L1836 1201 L1833 1217 M1962 1182 L1941 1194 L1932 1207 L1910 1216 M2695 1166 L2715 1162 L2747 1167 L2771 1160 M2771 1160 L2770 1173 L2769 1193 L2775 1207 M1556 1228 L1558 1243 L1556 1249 L1559 1267 M1675 1209 L1694 1220 L1701 1231 L1718 1239 M1910 1216 L1921 1216 L1939 1214 L1953 1210 M1953 1210 L1948 1237 L1950 1256 L1950 1277 M2044 1241 L2056 1233 L2062 1231 L2073 1225 M2349 1213 L2351 1231 L2341 1253 L2343 1275 M2401 1226 L2418 1224 L2442 1225 L2463 1230 M2401 1226 L2381 1242 L2367 1259 L2343 1275 M2775 1207 L2780 1230 L2790 1258 L2795 1287 M1362 1297 L1343 1315 L1330 1333 L1313 1350 M1559 1267 L1573 1277 L1592 1293 L1616 1308 M2451 1305 L2453 1316 L2457 1326 L2455 1329 M1313 1350 L1299 1361 L1293 1379 L1284 1395 M1344 1359 L1361 1377 L1376 1398 L1390 1410 M1410 1330 L1407 1361 L1397 1380 L1390 1410 M1487 1324 L1509 1330 L1528 1327 L1552 1334 M1606 1369 L1624 1364 L1642 1355 L1665 1354 M1665 1354 L1684 1346 L1696 1333 L1714 1322 M1153 1427 L1151 1450 L1148 1470 L1152 1490 M1330 1421 L1348 1420 L1370 1417 L1390 1410 M1496 1391 L1501 1398 L1515 1403 L1523 1413 M1523 1413 L1524 1428 L1530 1449 L1540 1461 M1599 1415 L1578 1433 L1557 1441 L1540 1461 M1599 1415 L1591 1435 L1593 1452 L1585 1476 M1714 1398 L1730 1410 L1749 1413 L1763 1427 M2481 1409 L2491 1408 L2508 1411 L2518 1415 M2518 1415 L2548 1411 L2584 1402 L2613 1394 M1585 1476 L1594 1487 L1594 1501 L1601 1518 M1641 1490 L1626 1494 L1617 1506 L1601 1518 M2597 1486 L2622 1494 L2650 1505 L2672 1512 M2659 1460 L2670 1455 L2688 1456 L2696 1451 M2696 1451 L2707 1467 L2723 1492 L2734 1509 M2672 1512 L2689 1512 L2713 1512 L2734 1509 M2672 1512 L2706 1520 L2733 1521 L2763 1521"/></g><g fill="none" stroke="#e59a90" stroke-width="1.5" opacity=".85"><path d="M1233 275Q1181.3 309.1 1123 330"/><path d="M1233 275Q1215.2 350.7 1180 420"/><path d="M1233 275Q1190.0 267.5 1150 250"/><path d="M1655 470Q1602.1 430.7 1560 380"/><path d="M1560 380Q1550.2 340.6 1550 300"/><path d="M1550 300Q1567.9 280.1 1590 265"/><path d="M1655 470Q1653.3 434.7 1660 400"/><path d="M1660 400Q1693.8 385.8 1730 380"/><path d="M1655 470Q1611.3 465.1 1570 450"/><path d="M1570 450Q1560.8 415.6 1560 380"/><path d="M1570 450Q1522.7 478.5 1470 495"/><path d="M1470 495Q1459.1 488.7 1450 480"/><path d="M1470 495Q1439.5 536.7 1400 570"/><path d="M1400 570Q1376.8 588.0 1350 600"/><path d="M1655 470Q1597.0 515.0 1530 545"/><path d="M1655 470Q1685.2 489.2 1710 515"/><path d="M1560 380Q1521.9 442.9 1470 495"/><path d="M1590 265Q1594.1 256.9 1600 250"/><path d="M1550 300Q1522.0 278.0 1500 250"/><path d="M1450 480Q1388.5 474.7 1330 455"/><path d="M1560 380Q1488.8 378.4 1420 360"/><path d="M1550 300Q1475.0 309.0 1400 300"/><path d="M1530 545Q1466.5 565.3 1400 570"/><path d="M1800 570Q1830.7 563.8 1862 565"/><path d="M1790 600Q1792.4 620.0 1790 640"/><path d="M1790 640Q1801.7 695.4 1800 752"/><path d="M1862 565Q1842.2 662.2 1800 752"/><path d="M1862 565Q1881.4 544.9 1905 530"/><path d="M1905 530Q1928.4 534.8 1950 545"/><path d="M1880 500Q1894.3 513.5 1905 530"/><path d="M1870 510Q1874.4 504.4 1880 500"/><path d="M1840 550Q1851.9 556.2 1862 565"/><path d="M1950 545Q1952.6 524.4 1960 505"/><path d="M1960 505Q1968.1 467.0 1985 432"/><path d="M1985 432Q1989.4 405.1 2000 380"/><path d="M2000 380Q2006.8 394.4 2010 410"/><path d="M2010 410Q2030.6 412.6 2050 420"/><path d="M2050 420Q2052.6 399.4 2060 380"/><path d="M2060 380Q2065.2 338.8 2080 300"/><path d="M2000 380Q2030.0 376.4 2060 380"/><path d="M2010 410Q2019.8 449.4 2020 490"/><path d="M2020 490Q1990.9 501.1 1960 505"/><path d="M1950 545Q1967.4 563.2 1980 585"/><path d="M1980 585Q2004.1 574.5 2030 570"/><path d="M2030 570Q2063.2 550.8 2100 540"/><path d="M2100 540Q2102.6 519.4 2110 500"/><path d="M2110 500Q2113.2 484.4 2120 470"/><path d="M2120 470Q2135.0 468.2 2150 470"/><path d="M2150 470Q2152.6 449.4 2160 430"/><path d="M2160 430Q2167.0 403.8 2180 380"/><path d="M2180 380Q2197.7 337.3 2225 300"/><path d="M2225 300Q2269.5 269.3 2320 250"/><path d="M2320 250Q2317.8 316.2 2300 380"/><path d="M2300 380Q2261.2 394.8 2220 400"/><path d="M2220 400Q2189.2 439.2 2150 470"/><path d="M2300 380Q2361.5 385.3 2420 405"/><path d="M2420 405Q2477.6 377.8 2540 365"/><path d="M2540 365Q2520.9 374.9 2500 380"/><path d="M2320 250Q2436.9 294.3 2540 365"/><path d="M2540 365Q2584.3 311.5 2640 270"/><path d="M2540 365Q2585.1 402.7 2620 450"/><path d="M2540 365Q2517.5 431.1 2480 490"/><path d="M2480 490Q2527.1 502.1 2570 525"/><path d="M2570 525Q2600.7 569.5 2620 620"/><path d="M2480 490Q2432.4 516.0 2380 530"/><path d="M2380 530Q2331.4 505.4 2290 470"/><path d="M2290 470Q2289.6 424.4 2300 380"/><path d="M2290 470Q2266.2 546.4 2225 615"/><path d="M2225 615Q2158.0 585.0 2100 540"/><path d="M2225 615Q2208.7 627.1 2190 635"/><path d="M2190 635Q2207.7 655.7 2220 680"/><path d="M2220 680Q2223.6 710.0 2220 740"/><path d="M2220 740Q2251.2 746.4 2280 760"/><path d="M2280 760Q2306.8 772.0 2330 790"/><path d="M2330 790Q2361.2 796.4 2390 810"/><path d="M2390 810Q2415.8 813.5 2440 823"/><path d="M2225 615Q2279.6 626.2 2330 650"/><path d="M2330 650Q2373.0 670.2 2410 700"/><path d="M2410 700Q2432.4 759.7 2440 823"/><path d="M2410 700Q2447.4 715.8 2480 740"/><path d="M2480 740Q2544.2 767.8 2600 810"/><path d="M2440 823Q2492.2 835.5 2540 860"/><path d="M2540 860Q2567.0 831.4 2600 810"/><path d="M2600 810Q2683.8 789.8 2770 790"/><path d="M2770 790Q2765.2 750.0 2770 710"/><path d="M2770 710Q2689.6 674.0 2620 620"/><path d="M2620 620Q2597.7 645.5 2570 665"/><path d="M2570 665Q2492.1 692.1 2410 700"/><path d="M2620 620Q2645.5 578.9 2680 545"/><path d="M2620 620Q2670.0 614.0 2720 620"/><path d="M2720 620Q2750.4 662.0 2770 710"/><path d="M2620 620Q2637.2 678.8 2640 740"/><path d="M2640 740Q2624.2 777.4 2600 810"/><path d="M2570 525Q2557.1 544.3 2540 560"/><path d="M2540 560Q2458.2 554.6 2380 530"/><path d="M2570 525Q2684.7 508.7 2800 520"/><path d="M2620 450Q2714.2 474.2 2800 520"/><path d="M2300 560Q2338.2 540.2 2380 530"/><path d="M2300 560Q2320.4 603.2 2330 650"/><path d="M2320 440Q2306.8 456.8 2290 470"/><path d="M2770 790Q2743.7 866.7 2700 935"/><path d="M2700 935Q2703.3 962.5 2700 990"/><path d="M2700 990Q2651.2 1006.0 2600 1010"/><path d="M2600 1010Q2683.0 1025.4 2760 1060"/><path d="M2700 935Q2661.5 952.3 2620 960"/><path d="M2620 960Q2613.0 986.2 2600 1010"/><path d="M2620 960Q2574.0 914.8 2540 860"/><path d="M2600 1010Q2583.6 1042.4 2560 1070"/><path d="M2560 1070Q2531.2 1083.6 2500 1090"/><path d="M2500 1090Q2485.6 1096.8 2470 1100"/><path d="M2470 1100Q2433.8 1094.2 2400 1080"/><path d="M2400 1080Q2335.6 1092.8 2270 1090"/><path d="M2270 1090Q2227.4 1115.4 2180 1130"/><path d="M2180 1130Q2223.6 1155.2 2260 1190"/><path d="M2270 1090Q2271.0 1140.6 2260 1190"/><path d="M2270 1090Q2313.6 1115.2 2350 1150"/><path d="M2350 1150Q2398.9 1151.7 2446 1165"/><path d="M2446 1165Q2454.1 1131.1 2470 1100"/><path d="M2446 1165Q2452.8 1204.8 2450 1245"/><path d="M2450 1245Q2490.5 1328.9 2510 1420"/><path d="M2450 1245Q2472.7 1265.1 2490 1290"/><path d="M2490 1290Q2507.8 1353.8 2510 1420"/><path d="M2446 1165Q2509.9 1215.7 2560 1280"/><path d="M2560 1280Q2525.6 1289.2 2490 1290"/><path d="M2510 1420Q2580.4 1457.2 2640 1510"/><path d="M2400 1080Q2402.0 1054.4 2410 1030"/><path d="M2410 1030Q2422.6 1008.2 2440 990"/><path d="M2440 990Q2415.2 952.4 2400 910"/><path d="M2400 910Q2414.8 864.1 2440 823"/><path d="M2400 910Q2355.6 920.4 2310 920"/><path d="M2310 920Q2268.2 909.8 2230 890"/><path d="M2230 890Q2194.7 891.7 2160 885"/><path d="M2160 885Q2168.3 911.9 2170 940"/><path d="M2170 940Q2143.0 968.6 2110 990"/><path d="M2110 990Q2085.6 998.0 2060 1000"/><path d="M2230 890Q2203.0 918.6 2170 940"/><path d="M2270 1090Q2244.6 1047.4 2230 1000"/><path d="M2160 885Q2153.5 873.1 2150 860"/><path d="M2150 860Q2160.5 820.7 2180 785"/><path d="M2180 785Q2197.3 760.1 2220 740"/><path d="M2180 785Q2123.5 779.1 2070 760"/><path d="M2070 760Q2072.6 739.4 2080 720"/><path d="M2080 720Q2067.1 697.2 2060 672"/><path d="M2060 672Q2014.8 633.3 1980 585"/><path d="M2080 720Q2109.7 713.9 2140 715"/><path d="M2140 715Q2177.9 692.7 2220 680"/><path d="M2080 720Q1988.8 720.8 1900 700"/><path d="M1900 700Q1853.1 732.0 1800 752"/><path d="M1900 700Q1872.9 634.8 1862 565"/><path d="M2070 760Q1996.8 784.0 1920 790"/><path d="M1920 790Q1857.7 778.2 1800 752"/><path d="M1920 790Q1964.4 843.0 1995 905"/><path d="M1800 752Q1855.3 790.0 1900 840"/><path d="M1900 840Q1951.4 866.8 1995 905"/><path d="M1995 905Q2015.4 884.8 2040 870"/><path d="M2040 870Q2094.4 858.4 2150 860"/><path d="M1995 905Q2001.8 982.8 1990 1060"/><path d="M1990 1060Q2021.4 1025.8 2060 1000"/><path d="M1990 1060Q2028.6 1085.8 2060 1120"/><path d="M1990 1060Q1976.8 1076.8 1960 1090"/><path d="M1990 1060Q2000.4 1104.4 2000 1150"/><path d="M2000 1150Q1999.8 1190.6 1990 1230"/><path d="M1990 1230Q2009.6 1258.1 2022 1290"/><path d="M1990 1230Q1981.5 1243.7 1970 1255"/><path d="M1970 1255Q1955.3 1259.3 1940 1260"/><path d="M1940 1260Q1921.8 1277.4 1900 1290"/><path d="M1900 1290Q1870.6 1298.6 1840 1300"/><path d="M1840 1300Q1803.9 1286.6 1772 1265"/><path d="M1900 1290Q1895.4 1336.2 1880 1380"/><path d="M1880 1380Q1860.1 1425.5 1830 1465"/><path d="M2022 1290Q2083.0 1257.3 2150 1240"/><path d="M2150 1240Q2202.0 1208.4 2260 1190"/><path d="M2060 1120Q2120.6 1117.8 2180 1130"/><path d="M1800 752Q1763.8 724.9 1735 690"/><path d="M1735 690Q1678.4 704.4 1620 705"/><path d="M1620 705Q1573.5 697.9 1530 680"/><path d="M1620 705Q1652.5 764.5 1670 830"/><path d="M1800 752Q1739.7 798.8 1670 830"/><path d="M1670 830Q1612.3 835.4 1555 827"/><path d="M1555 827Q1495.9 820.4 1440 800"/><path d="M1440 800Q1390.3 808.5 1340 805"/><path d="M1340 805Q1351.5 816.3 1360 830"/><path d="M1360 830Q1411.8 839.0 1460 860"/><path d="M1460 860Q1508.6 884.6 1550 920"/><path d="M1555 827Q1558.1 873.8 1550 920"/><path d="M1550 920Q1577.6 896.4 1610 880"/><path d="M1610 880Q1637.0 851.4 1670 830"/><path d="M1610 880Q1662.5 873.7 1715 880"/><path d="M1800 752Q1800.9 801.6 1790 850"/><path d="M1790 850Q1754.3 869.5 1715 880"/><path d="M1715 880Q1702.3 922.1 1680 960"/><path d="M1680 960Q1666.8 976.8 1650 990"/><path d="M1650 990Q1626.2 1003.0 1600 1010"/><path d="M1680 960Q1696.0 1008.8 1700 1060"/><path d="M1700 1060Q1675.2 1107.1 1640 1147"/><path d="M1550 920Q1580.4 962.0 1600 1010"/><path d="M1790 850Q1804.8 888.8 1810 930"/><path d="M1810 930Q1854.0 1000.8 1880 1080"/><path d="M1880 1080Q1920.6 1080.2 1960 1090"/><path d="M1880 1080Q1818.8 1077.2 1760 1060"/><path d="M1760 1060Q1714.0 1014.8 1680 960"/><path d="M1760 1060Q1768.6 1089.4 1770 1120"/><path d="M1770 1120Q1779.7 1192.4 1772 1265"/><path d="M1880 1080Q1871.6 1136.8 1850 1190"/><path d="M1850 1190Q1899.2 1219.6 1940 1260"/><path d="M1640 1147Q1673.8 1174.9 1700 1210"/><path d="M1700 1210Q1739.3 1233.2 1772 1265"/><path d="M1640 1147Q1613.6 1222.7 1570 1290"/><path d="M1570 1290Q1606.8 1300.8 1640 1320"/><path d="M1640 1320Q1702.7 1284.6 1772 1265"/><path d="M1710 1110Q1740.6 1111.4 1770 1120"/><path d="M1570 1290Q1515.6 1301.6 1460 1300"/><path d="M1460 1300Q1439.4 1297.4 1420 1290"/><path d="M1420 1290Q1350.6 1303.4 1280 1300"/><path d="M1280 1300Q1202.1 1314.4 1123 1310"/><path d="M1280 1300Q1289.2 1334.4 1290 1370"/><path d="M1290 1370Q1322.0 1404.2 1345 1445"/><path d="M1460 1300Q1476.8 1313.2 1490 1330"/><path d="M1490 1330Q1442.4 1356.0 1390 1370"/><path d="M1390 1370Q1372.0 1410.2 1345 1445"/><path d="M1490 1330Q1530.9 1332.7 1570 1345"/><path d="M1490 1330Q1483.6 1361.2 1470 1390"/><path d="M1470 1390Q1538.4 1410.7 1600 1447"/><path d="M1570 1345Q1591.1 1394.2 1600 1447"/><path d="M1600 1447Q1660.8 1446.3 1720 1460"/><path d="M1720 1460Q1775.3 1455.9 1830 1465"/><path d="M1345 1445Q1327.1 1486.2 1300 1522"/><path d="M1345 1445Q1377.1 1480.2 1400 1522"/><path d="M1600 1447Q1584.5 1486.9 1560 1522"/><path d="M1390 1370Q1431.2 1375.2 1470 1390"/><path d="M1290 1370Q1208.3 1395.0 1123 1400"/><path d="M1772 1265Q1792.3 1315.8 1800 1370"/><path d="M1830 1465Q1808.4 1496.5 1780 1522"/><path d="M1600 1447Q1624.5 1482.1 1640 1522"/><path d="M1780 960Q1793.2 943.2 1810 930"/><path d="M1780 960Q1776.0 1011.2 1760 1060"/><path d="M1900 700Q1841.4 676.6 1790 640"/><path d="M1735 690Q1759.5 661.7 1790 640"/><path d="M1715 880Q1765.5 899.3 1810 930"/><path d="M2470 1100Q2435.8 1068.6 2410 1030"/><path d="M2760 1060Q2785.9 1026.5 2819 1000"/><path d="M2770 790Q2792.7 772.1 2819 760"/><path d="M2770 710Q2792.7 692.1 2819 680"/><path d="M2800 520Q2814.3 558.9 2819 600"/><path d="M2640 270Q2731.3 274.3 2819 300"/><path d="M2540 365Q2681.0 360.8 2819 390"/><path d="M2780 1300Q2755.6 1181.2 2760 1060"/><path d="M2620 1130Q2685.8 1086.6 2760 1060"/><path d="M2620 1130Q2602.8 1071.2 2600 1010"/></g><g fill="none" stroke="#a5a3a8" stroke-width="1.8" opacity=".85"><polyline points="1830.0,530.0 1832.7,533.6 1834.8,537.7 1835.7,542.4 1840.1,544.9 1842.5,548.8 1844.6,552.7 1848.8,555.4 1850.0,560.0 1853.7,562.5 1857.1,565.5 1860.4,568.7 1866.1,568.3 1869.3,571.7 1873.6,573.3 1875.4,578.8 1880.0,580.0 1883.2,583.3 1888.8,583.1 1889.9,589.5 1893.7,591.9 1898.3,593.1 1902.2,595.5 1907.2,596.1 1910.0,600.0 1915.1,600.5 1917.4,605.1 1922.5,605.7 1925.9,608.7 1929.5,611.4 1933.8,613.0 1936.4,617.3 1940.0,620.0 1944.0,622.0 1946.9,625.9 1951.6,626.7 1955.2,629.5 1959.4,631.1 1962.9,634.0 1967.3,635.4 1971.7,636.8 1975.0,640.0 1977.0,644.8 1980.6,647.6 1984.7,649.9 1988.6,652.2 1993.4,653.6 1997.3,656.1 2000.0,660.0 2004.6,660.4 2009.3,660.8 2012.4,665.5 2017.3,665.2 2020.9,668.8 2025.9,668.0 2030.0,670.0 2032.5,674.4 2036.5,676.4 2042.6,675.4 2045.8,678.8 2047.6,684.2 2052.6,684.9 2054.9,689.5 2060.0,690.0"/><polyline points="1890.0,460.0 1894.6,460.6 1899.4,460.2 1903.2,464.0 1907.4,465.8 1912.5,464.4 1917.2,464.7 1921.3,467.0 1925.0,471.1 1930.0,470.0 1933.0,473.6 1938.6,473.4 1942.0,476.4 1946.1,478.3 1950.0,480.7 1951.7,486.2 1957.1,486.2 1960.0,490.0 1964.4,491.4 1969.0,492.0 1973.7,491.8 1977.5,495.6 1982.7,493.8 1986.5,497.4 1991.6,495.9 1995.7,498.5 2000.0,500.0 2004.3,502.3 2007.5,505.9 2008.3,511.7 2012.3,514.4 2017.4,516.0 2018.6,521.4 2024.4,522.3 2027.0,526.3 2030.0,530.0 2031.0,534.7 2034.4,537.9 2039.2,540.1 2038.0,546.4 2043.7,548.0 2046.0,551.8 2046.4,557.0 2050.0,560.0"/><polyline points="2125.0,280.0 2124.5,284.8 2123.2,289.4 2123.0,294.2 2121.5,298.8 2117.8,302.6 2118.0,307.6 2115.0,311.7 2114.7,316.5 2113.0,321.0 2109.2,324.8 2110.0,330.0 2109.2,334.6 2107.8,339.0 2105.5,343.3 2107.9,348.5 2107.2,353.1 2102.5,356.9 2102.1,361.5 2104.0,366.6 2103.3,371.2 2099.7,375.2 2100.0,380.0 2096.8,383.9 2099.2,389.3 2094.5,392.8 2093.7,397.3 2093.9,402.1 2093.7,406.8 2094.1,411.6 2093.3,416.1 2090.0,420.0 2085.7,423.4 2086.7,429.5 2082.4,432.9 2082.2,438.3 2077.4,441.5 2076.2,446.5 2075.4,451.6 2073.7,456.3 2070.0,460.0 2066.8,464.0 2067.5,469.9 2064.5,473.9 2060.8,477.6 2057.3,481.4 2056.2,486.4 2055.4,491.6 2050.4,494.6 2050.0,500.0 2051.5,504.6 2052.4,509.2 2051.2,513.8 2050.3,518.5 2052.2,523.1 2051.6,527.7 2050.7,532.3 2049.6,536.9 2051.8,541.5 2050.7,546.2 2048.0,550.8 2047.6,555.4 2050.0,560.0 2050.3,564.6 2051.3,569.1 2052.9,573.4 2056.2,577.3 2057.8,581.7 2059.0,586.1 2055.8,591.6 2057.9,595.8 2060.0,600.0 2056.6,603.9 2060.1,609.5 2056.0,613.2 2055.6,617.8 2053.3,621.9 2054.2,626.9 2049.8,630.5 2053.2,636.1 2050.0,640.0 2050.7,644.6 2050.7,649.3 2050.8,654.0 2052.5,658.4 2053.5,662.9 2054.0,667.6 2054.3,672.2 2058.0,676.2 2057.3,681.1 2057.1,685.8 2060.0,690.0 2063.9,693.5 2069.2,693.3 2073.1,696.8 2077.5,699.0 2082.6,699.4 2087.0,701.5 2092.0,702.2 2096.2,704.9 2100.7,706.9 2106.2,706.2 2110.0,710.0 2112.8,713.8 2114.9,718.4 2118.7,721.3 2122.5,724.1 2127.1,726.3 2129.2,730.8 2133.0,733.6 2136.9,736.5 2140.0,740.0 2141.1,744.7 2146.7,746.3 2146.5,751.9 2152.0,753.7 2152.1,759.0 2155.1,762.4 2158.6,765.5 2160.0,770.0 2158.6,774.4 2159.1,779.1 2158.1,783.6 2156.1,788.0 2158.9,792.8 2159.7,797.5 2157.8,801.9 2155.5,806.3 2157.4,811.1 2157.1,815.6 2155.0,820.0 2152.5,824.3 2153.3,829.0 2153.9,833.7 2151.2,838.0 2153.6,842.8 2151.4,847.2 2153.3,852.0 2151.7,856.4 2149.4,860.8 2148.4,865.2 2150.0,870.0"/><polyline points="2150.0,870.0 2154.2,872.8 2159.2,871.3 2163.6,873.1 2168.4,872.7 2173.1,872.8 2177.3,875.4 2181.5,878.0 2186.0,879.0 2190.7,879.2 2195.0,881.3 2200.0,880.0 2204.7,879.3 2209.4,879.1 2213.9,880.9 2218.6,880.4 2223.2,880.5 2227.7,881.9 2232.3,883.3 2236.9,883.0 2241.6,882.5 2246.0,885.5 2250.6,886.6 2255.4,884.4 2260.0,885.0 2265.2,885.2 2269.6,887.2 2272.0,893.1 2278.2,891.5 2281.0,896.6 2285.6,898.2 2290.0,900.0 2292.3,904.0 2291.5,909.0 2296.6,912.1 2297.4,916.6 2297.4,921.4 2300.8,925.0 2300.0,930.0 2296.1,932.8 2296.1,938.2 2294.0,942.2 2291.9,946.3 2287.0,948.4 2285.2,952.6 2282.0,955.9 2280.0,960.0 2276.9,963.3 2273.7,966.6 2270.6,970.0 2269.2,974.5 2268.8,979.6 2265.1,982.6 2263.8,987.1 2260.0,990.0 2256.5,993.7 2251.5,993.0 2246.8,993.3 2243.4,997.2 2238.9,998.2 2234.5,999.3 2230.0,1000.0 2225.4,1000.5 2221.4,1002.8 2217.0,1003.7 2212.5,1004.5 2208.7,1007.6 2203.8,1007.2 2200.0,1010.0 2196.4,1006.6 2190.8,1009.1 2187.8,1003.7 2183.2,1003.2 2178.0,1004.6 2174.2,1001.6 2170.0,1000.0 2165.9,998.0 2162.1,995.2 2156.9,996.3 2153.0,994.0 2149.2,991.1 2144.8,990.0 2140.0,990.0 2135.7,987.8 2131.4,990.2 2127.1,989.2 2122.9,991.5 2118.6,988.9 2114.3,988.4 2110.0,990.0 2105.5,990.8 2101.1,991.8 2097.6,995.6 2092.2,993.8 2087.8,994.9 2083.5,996.3 2080.0,1000.0 2076.0,999.8 2072.0,998.5 2068.0,1000.9 2064.0,998.0 2060.0,1000.0 2063.8,996.4 2063.8,990.8 2064.8,985.7 2068.6,982.1 2071.3,977.9 2074.5,973.9 2075.5,968.9 2075.7,963.4 2080.0,960.0 2084.6,958.5 2086.0,952.8 2091.8,953.0 2093.6,947.8 2097.7,945.7 2102.7,944.8 2104.4,939.5 2108.0,936.8 2112.8,935.5 2117.0,933.6 2120.0,930.0 2124.5,927.9 2127.3,924.0 2131.6,921.6 2133.3,916.6 2138.3,914.9 2138.5,908.5 2142.3,905.7 2146.8,903.4 2150.0,900.0 2149.0,895.7 2151.1,891.4 2150.7,887.1 2150.1,882.9 2151.7,878.6 2150.3,874.3 2150.0,870.0"/><polyline points="2290.0,900.0 2294.4,898.2 2299.0,897.6 2304.0,899.0 2308.6,898.3 2312.4,894.0 2317.6,896.3 2322.3,895.9 2326.4,892.8 2331.0,892.2 2335.2,889.4 2340.0,890.0 2344.6,889.4 2349.2,888.5 2353.9,888.2 2358.1,884.6 2363.5,888.5 2367.7,885.5 2372.2,884.1 2377.2,885.3 2381.6,883.4 2386.1,882.3 2390.9,882.5 2395.0,878.6 2400.0,880.0 2404.6,879.3 2409.0,877.8 2414.1,879.5 2418.6,878.4 2422.5,874.3 2427.2,874.4 2431.5,871.8 2436.3,872.4 2441.2,873.4 2445.8,872.9 2450.0,870.0 2454.5,869.0 2458.9,867.3 2463.3,865.8 2468.3,866.9 2473.1,867.5 2476.9,862.7 2482.1,865.0 2485.9,860.4 2490.6,860.3 2495.2,859.6 2500.0,860.0 2504.9,858.6 2508.5,854.8 2513.0,852.7 2518.0,851.6 2521.3,847.1 2527.2,847.7 2530.3,842.8 2535.6,842.3 2540.0,840.0 2542.9,836.3 2546.4,833.3 2551.0,831.9 2554.4,828.8 2557.8,825.9 2561.6,823.3 2565.5,821.0 2568.1,816.8 2571.8,814.3 2576.8,813.3 2580.0,810.0 2584.1,807.8 2587.4,804.7 2592.0,803.2 2594.9,799.5 2599.3,797.8 2601.0,792.6 2606.2,791.9 2610.0,789.4 2613.9,787.1 2615.8,782.0 2620.0,780.0 2622.7,776.0 2628.2,774.8 2629.0,769.0 2635.1,768.4 2638.0,764.7 2640.0,760.0"/><polyline points="2300.0,930.0 2305.1,930.9 2309.0,933.9 2311.9,938.5 2317.3,939.0 2321.9,940.8 2324.1,946.4 2329.4,947.2 2332.6,951.2 2338.5,950.9 2341.9,954.6 2345.4,958.3 2350.0,960.0 2355.0,958.3 2359.5,959.9 2363.9,962.9 2368.4,964.7 2373.0,965.7 2378.3,962.1 2382.7,964.7 2387.2,966.6 2392.0,966.0 2396.5,967.6 2401.6,965.8 2406.3,965.9 2410.9,966.7 2415.7,967.0 2420.0,970.0 2424.7,968.7 2429.3,967.0 2434.0,965.7 2437.9,962.2 2442.6,960.8 2447.2,959.4 2452.8,960.8 2457.7,960.0 2462.2,958.2 2465.5,952.7 2470.1,951.0 2476.1,953.7 2480.0,950.0 2484.6,950.6 2489.0,952.8 2494.0,951.5 2498.5,952.9 2503.1,953.9 2507.7,954.3 2512.2,955.9 2517.3,953.8 2521.4,957.9 2525.9,959.4 2531.0,956.9 2535.4,959.0 2540.0,960.0 2544.4,961.9 2549.3,961.1 2554.1,960.8 2558.7,961.4 2563.1,963.9 2568.1,962.2 2572.0,967.3 2576.7,967.6 2581.4,967.9 2585.9,969.5 2590.7,969.1 2595.5,968.8 2600.0,970.0 2604.5,971.3 2609.2,971.6 2613.4,974.7 2618.2,974.6 2623.3,972.7 2627.4,976.6 2632.1,976.6 2636.7,977.5 2641.3,978.5 2646.2,977.2 2650.4,980.4 2655.1,981.1 2660.0,980.0 2664.5,981.7 2669.0,982.9 2673.6,983.6 2678.5,982.6 2682.9,984.9 2688.0,982.5 2692.4,984.6 2696.9,986.0 2701.9,984.5 2706.3,987.0 2710.7,989.1 2715.3,989.8 2720.0,990.0 2724.4,988.7 2728.9,992.2 2733.3,990.8 2737.8,989.2 2742.2,990.8 2746.7,990.3 2751.1,990.2 2755.6,989.4 2760.0,990.0 2761.6,995.1 2766.2,997.2 2769.3,1000.7 2772.4,1004.3 2775.0,1008.4 2781.7,1008.3 2782.9,1013.7 2785.8,1017.5 2790.9,1019.1 2793.7,1023.0 2798.3,1025.1 2800.0,1030.0 2803.9,1032.9 2805.8,1037.1 2809.5,1040.1 2811.5,1044.3 2811.5,1049.9 2815.5,1052.6 2818.3,1056.3 2821.0,1060.0"/><polyline points="2520.0,560.0 2524.7,561.8 2528.9,559.2 2533.6,560.8 2537.9,558.5 2542.4,558.8 2546.4,554.6 2551.2,556.6 2555.7,556.8 2560.0,555.0 2563.6,551.2 2569.6,553.7 2572.7,548.4 2577.7,548.2 2581.6,545.1 2586.7,545.0 2591.3,543.9 2594.8,539.6 2600.0,540.0 2603.9,543.3 2609.0,541.8 2613.3,543.5 2617.7,544.9 2622.4,544.9 2626.9,545.6 2630.9,548.5 2635.5,549.2 2640.0,550.0 2644.2,547.8 2649.2,548.8 2653.1,545.7 2657.2,543.2 2661.9,543.2 2666.1,541.1 2670.7,540.6 2675.9,542.3 2680.0,540.0 2684.7,541.7 2688.0,546.2 2692.8,547.8 2698.8,546.9 2701.1,553.3 2705.7,555.3 2712.1,553.6 2714.6,559.6 2720.0,560.0 2723.8,562.4 2727.3,565.4 2729.5,570.1 2735.3,569.9 2738.1,573.7 2740.5,578.1 2744.8,580.0 2749.2,581.7 2751.3,586.5 2755.4,588.5 2760.0,590.0 2763.3,593.1 2768.4,593.9 2770.5,598.7 2774.7,600.7 2779.1,602.5 2783.2,604.6 2785.4,609.2 2790.2,610.3 2792.9,614.3 2795.9,617.9 2800.0,620.0 2803.7,623.2 2807.8,625.8 2810.2,630.3 2814.3,633.0 2816.5,637.7 2821.0,640.0"/><polyline points="2520.0,560.0 2516.6,563.2 2511.6,564.9 2508.4,568.4 2505.8,572.5 2504.3,577.6 2501.4,581.4 2495.3,581.9 2492.3,585.7 2489.6,589.6 2487.2,593.8 2484.1,597.5 2480.0,600.0 2478.0,604.2 2477.5,608.8 2476.2,613.2 2474.9,617.6 2473.2,621.9 2474.8,627.0 2473.4,631.4 2468.8,635.0 2470.0,640.0 2471.1,644.9 2473.9,648.4 2480.0,649.5 2482.7,653.2 2484.6,657.5 2486.7,661.6 2488.6,665.8 2493.4,667.9 2494.4,672.9 2499.0,675.1 2500.0,680.0 2505.1,681.5 2507.1,686.8 2511.4,689.4 2515.0,692.8 2519.6,694.9 2523.1,698.4 2527.8,700.4 2531.3,704.0 2533.9,708.6 2537.4,712.1 2543.6,712.2 2547.3,715.4 2550.0,720.0 2552.9,724.3 2557.3,726.6 2560.7,730.3 2566.3,731.2 2569.5,735.1 2573.8,737.5 2576.0,742.7 2581.2,744.1 2584.1,748.3 2586.9,752.7 2592.9,753.2 2596.0,757.1 2600.0,760.0 2604.4,761.2 2608.9,762.1 2613.3,759.6 2617.8,759.3 2622.2,758.0 2626.7,761.9 2631.1,757.9 2635.6,757.9 2640.0,760.0 2644.7,758.8 2649.2,756.9 2654.1,756.3 2658.1,752.9 2663.5,753.6 2667.0,748.8 2671.9,747.9 2677.2,748.5 2680.9,744.2 2685.8,743.7 2691.1,744.1 2695.7,742.5 2700.0,740.0 2704.3,737.4 2708.7,735.2 2713.6,734.7 2718.8,734.9 2722.9,731.7 2727.1,729.0 2732.6,730.2 2737.0,728.0 2742.2,728.1 2746.8,726.7 2751.4,725.0 2755.3,721.2 2760.0,720.0 2765.1,719.1 2768.5,714.7 2772.9,712.5 2777.6,710.7 2783.2,710.8 2787.5,708.4 2790.5,703.3 2795.2,701.6 2800.0,700.0 2803.9,697.4 2808.1,695.4 2812.4,693.5 2816.6,691.5 2821.0,690.0"/><polyline points="2640.0,250.0 2642.4,254.2 2641.5,259.2 2641.3,263.9 2643.4,268.2 2642.9,273.1 2645.1,277.3 2647.9,281.5 2646.0,286.6 2646.3,291.3 2650.2,295.2 2650.0,300.0 2654.0,303.7 2653.6,309.1 2655.2,313.7 2657.0,318.3 2656.9,323.6 2660.2,327.6 2661.3,332.4 2666.6,335.6 2666.1,341.0 2666.8,346.0 2670.0,350.0 2672.9,354.1 2673.9,358.7 2671.6,363.9 2671.7,368.6 2676.6,372.3 2674.8,377.4 2678.1,381.5 2676.1,386.6 2677.5,391.1 2680.3,395.2 2680.0,400.0 2682.3,404.3 2680.5,409.4 2682.6,413.7 2682.3,418.4 2685.1,422.6 2686.2,427.1 2684.1,432.3 2686.4,436.5 2688.2,440.9 2688.9,445.5 2690.0,450.0 2689.8,454.8 2690.8,459.3 2690.7,464.0 2694.1,468.1 2692.9,473.0 2694.6,477.4 2694.6,482.2 2695.8,486.7 2696.5,491.2 2697.2,495.8 2700.0,500.0 2697.7,504.4 2699.3,508.9 2699.9,513.3 2698.9,517.8 2698.5,522.2 2700.4,526.7 2700.4,531.1 2701.8,535.6 2700.0,540.0"/><polyline points="2060.0,1000.0 2061.8,1004.4 2063.5,1008.7 2068.7,1010.5 2072.2,1013.5 2074.8,1017.3 2076.7,1021.6 2079.9,1024.8 2079.9,1030.5 2086.3,1031.4 2088.0,1035.8 2090.0,1040.0 2093.0,1044.0 2091.5,1049.1 2092.0,1053.7 2096.0,1057.4 2097.7,1061.7 2096.9,1066.6 2097.4,1071.2 2096.9,1076.1 2100.0,1080.0 2103.4,1083.9 2104.1,1088.4 2104.9,1093.0 2105.8,1097.4 2106.8,1101.9 2105.6,1106.9 2107.3,1111.2 2110.2,1115.2 2110.0,1120.0 2113.6,1123.7 2115.4,1128.4 2118.1,1132.6 2117.7,1138.4 2122.0,1141.8 2123.1,1146.8 2124.1,1151.8 2127.9,1155.5 2130.0,1160.0 2133.7,1162.9 2133.9,1168.4 2136.5,1172.2 2141.5,1174.1 2143.4,1178.3 2144.5,1183.2 2149.2,1185.4 2152.9,1188.3 2156.3,1191.4 2155.5,1197.7 2160.0,1200.0 2160.9,1205.1 2165.0,1208.6 2166.5,1213.4 2168.8,1217.8 2172.1,1221.7 2171.1,1227.8 2174.9,1231.5 2179.0,1235.0 2180.0,1240.0"/><polyline points="1560.0,1295.0 1565.3,1294.4 1568.9,1298.2 1573.6,1299.4 1577.3,1303.1 1581.8,1304.3 1586.5,1305.5 1591.7,1305.1 1596.2,1306.7 1600.0,1310.0 1604.7,1310.2 1609.2,1311.1 1612.9,1315.1 1617.8,1314.5 1622.1,1316.2 1626.1,1319.1 1631.4,1316.6 1635.5,1319.1 1640.0,1320.0 1644.9,1319.4 1648.6,1323.5 1653.9,1320.9 1657.4,1326.0 1661.8,1327.2 1666.3,1328.2 1671.6,1325.8 1675.8,1327.8 1680.0,1330.0 1684.2,1332.2 1689.4,1330.3 1693.4,1333.2 1697.8,1334.3 1701.7,1337.8 1706.6,1337.1 1710.7,1339.5 1715.8,1337.9 1720.0,1340.0 1724.1,1342.5 1729.0,1341.8 1732.8,1345.4 1738.3,1342.5 1741.8,1347.1 1747.0,1345.3 1751.1,1348.0 1755.5,1349.0 1760.0,1350.0 1764.9,1349.4 1768.5,1353.8 1773.6,1352.4 1778.0,1353.5 1782.7,1353.5 1786.9,1355.7 1791.2,1357.6 1795.3,1359.9 1800.0,1360.0 1804.6,1360.4 1808.7,1363.1 1813.8,1361.4 1817.9,1363.9 1822.3,1365.4 1826.1,1368.9 1830.7,1369.4 1835.4,1369.6 1840.0,1370.0 1845.1,1369.4 1848.6,1372.8 1852.1,1376.0 1857.2,1375.4 1860.7,1378.6 1865.0,1380.0"/><polyline points="1123.0,1420.0 1127.7,1418.8 1131.9,1415.6 1137.6,1419.4 1142.1,1417.5 1146.2,1413.6 1151.3,1414.6 1155.7,1412.0 1160.5,1411.4 1165.3,1411.2 1170.0,1410.0 1174.9,1411.3 1179.3,1413.7 1183.6,1416.2 1187.4,1419.6 1192.8,1420.0 1197.3,1422.0 1200.6,1426.6 1205.9,1427.0 1210.0,1430.0 1210.2,1435.4 1214.2,1439.0 1215.7,1443.8 1219.6,1447.4 1219.6,1453.0 1225.2,1455.8 1227.2,1460.3 1229.6,1464.6 1230.0,1470.0 1228.2,1474.6 1227.2,1479.3 1228.8,1484.5 1226.8,1489.0 1223.8,1493.3 1224.1,1498.3 1225.6,1503.5 1224.1,1508.1 1223.5,1512.9 1222.8,1517.6 1220.0,1522.0"/><polyline points="2600.0,1010.0 2603.9,1012.4 2608.6,1013.7 2609.6,1019.9 2614.8,1020.6 2618.1,1023.7 2621.4,1027.0 2624.7,1030.2 2628.1,1033.1 2633.1,1034.1 2636.9,1036.6 2640.0,1040.0 2644.6,1041.8 2650.0,1042.3 2653.6,1046.2 2657.3,1049.8 2661.1,1053.3 2666.0,1054.6 2670.8,1056.3 2675.3,1058.3 2680.0,1060.0 2684.5,1062.4 2685.7,1067.0 2688.2,1070.8 2689.4,1075.4 2694.1,1077.7 2695.5,1082.2 2697.5,1086.3 2700.0,1090.0"/><polyline points="2540.0,1020.0 2542.3,1024.4 2545.5,1027.8 2549.6,1030.4 2554.5,1032.1 2555.7,1037.6 2558.6,1041.4 2563.2,1043.5 2567.2,1046.1 2570.0,1050.0 2572.5,1053.8 2576.5,1056.5 2576.6,1061.8 2578.0,1066.4 2582.4,1068.8 2584.1,1073.1 2586.1,1077.2 2590.0,1080.0"/></g><g fill="none" stroke="#3b9de3" stroke-width="4" stroke-linejoin="round" stroke-linecap="round"><polyline points="1861.3,542.4 1877.0,534.6 1892.8,528.7 1912.4,538.5 1928.2,542.4 1936.0,540.5"/><polyline points="1861.3,544.0 1853.4,556.2 1851.5,572.0 1841.6,587.7 1837.7,601.5 1851.5,619.2 1859.3,650.6 1873.1,666.4 1892.8,680.1 1902.6,686.0 1910.5,713.6 1926.2,721.4 1930.1,737.2 1930.1,760.8 1924.2,772.6 1922.3,817.8 1932.1,821.8 1947.8,822.9 1967.5,831.6 1983.2,839.5 1993.1,851.3 1991.1,867.0 1989.1,912.2 2002.9,926.0 2016.7,951.6 2010.8,973.2 1999.0,1000.0 1996.5,1028.9 2018.0,1023.6 2032.3,1021.8 2039.4,1030.7 2051.9,1021.8 2053.7,1012.8"/><polyline points="1936.0,540.5 1940.0,552.3 1951.8,564.1 1967.5,583.8 1979.3,599.5 1983.2,619.2 1993.1,631.0 1995.0,644.7 2010.8,648.7 2022.6,664.4 2034.4,672.3 2050.1,674.2 2054.1,690.0 2058.0,721.4 2065.9,725.4 2101.3,724.6 2117.0,737.2 2124.9,758.8 2156.3,762.7 2162.2,772.6 2160.3,786.3 2148.5,792.3 2142.6,808.0 2138.6,819.8 2136.7,855.2 2144.5,874.9 2156.3,886.7 2179.9,886.7 2195.7,894.5 2213.4,902.4"/></g><g font-family="Liberation Sans" fill="#1a1a1a" stroke="#fff" stroke-width="3" paint-order="stroke" stroke-linejoin="round"><text x="1234" y="277" font-size="22" font-weight="bold">Dublin</text><text x="1986" y="386" font-size="21" font-weight="bold">Amsterdam</text><text x="1648" y="480" font-size="22" font-weight="bold">London</text><text x="1442" y="481" font-size="17" font-weight="bold">Cardiff</text><text x="1946" y="552" font-size="22" font-weight="bold">Brussels</text><text x="2555" y="369" font-size="22" font-weight="bold">Berlin</text><text x="2246" y="308" font-size="15" font-weight="normal">Bremen</text><text x="2308" y="386" font-size="15" font-weight="normal">Hanover</text><text x="2452" y="384" font-size="15" font-weight="normal">Potsdam</text><text x="2437" y="413" font-size="15" font-weight="normal">Magdeburg</text><text x="2630" y="269" font-size="15" font-weight="normal">Szczecin</text><text x="1956" y="435" font-size="15" font-weight="normal">Rotterdam</text><text x="2110" y="511" font-size="15" font-weight="normal">Düsseldorf</text><text x="2394" y="537" font-size="15" font-weight="normal">Erfurt</text><text x="2577" y="528" font-size="15" font-weight="normal">Dresden</text><text x="2666" y="557" font-size="15" font-weight="normal">Liberec</text><text x="2623" y="630" font-size="22" font-weight="bold">Prague</text><text x="1860" y="574" font-size="15" font-weight="normal">Lille</text><text x="1984" y="592" font-size="15" font-weight="normal">Namur</text><text x="2146" y="640" font-size="15" font-weight="normal">Mainz</text><text x="2207" y="630" font-size="15" font-weight="normal">Wiesbaden</text><text x="2066" y="679" font-size="19" font-weight="bold">Luxembourg</text><text x="2554" y="668" font-size="15" font-weight="normal">Pilsen</text><text x="1727" y="698" font-size="15" font-weight="normal">Rouen</text><text x="1812" y="760" font-size="22" font-weight="bold">Paris</text><text x="2124" y="719" font-size="15" font-weight="normal">Saarbrücken</text><text x="2771" y="722" font-size="15" font-weight="normal">Brno</text><text x="2269" y="766" font-size="15" font-weight="normal">Stuttgart</text><text x="2176" y="788" font-size="15" font-weight="normal">Strasbourg</text><text x="2708" y="800" font-size="22" font-weight="bold">Vienna</text><text x="2614" y="814" font-size="15" font-weight="normal">Linz</text><text x="2431" y="830" font-size="19" font-weight="bold">Munich</text><text x="2531" y="866" font-size="15" font-weight="normal">Salzburg</text><text x="1541" y="835" font-size="15" font-weight="normal">Rennes</text><text x="1783" y="856" font-size="15" font-weight="normal">Orléans</text><text x="2163" y="890" font-size="15" font-weight="normal">Basel</text><text x="2291" y="928" font-size="19" font-weight="bold">Vaduz</text><text x="2420" y="918" font-size="15" font-weight="normal">Innsbruck</text><text x="2689" y="939" font-size="15" font-weight="normal">Graz</text><text x="1992" y="913" font-size="15" font-weight="normal">Dijon</text><text x="1550" y="924" font-size="15" font-weight="normal">Nantes</text><text x="2155" y="951" font-size="22" font-weight="bold">Berne</text><text x="2100" y="993" font-size="15" font-weight="normal">Lausanne</text><text x="2030" y="1004" font-size="15" font-weight="normal">Geneva</text><text x="2570" y="1013" font-size="21" font-weight="bold">Ljubljana</text><text x="1980" y="1066" font-size="15" font-weight="normal">Lyon</text><text x="2400" y="1036" font-size="15" font-weight="normal">Trento</text><text x="2729" y="1061" font-size="22" font-weight="bold">Zagreb</text><text x="2578" y="1076" font-size="15" font-weight="normal">Trieste</text><text x="2269" y="1094" font-size="19" font-weight="bold">Milan</text><text x="2482" y="1097" font-size="15" font-weight="normal">Venice</text><text x="2169" y="1133" font-size="15" font-weight="normal">Turin</text><text x="1616" y="1153" font-size="15" font-weight="normal">Bordeaux</text><text x="2255" y="1197" font-size="15" font-weight="normal">Genoa</text><text x="2417" y="1187" font-size="15" font-weight="normal">Bologna</text><text x="2152" y="1257" font-size="19" font-weight="bold">Monaco</text><text x="2488" y="1238" font-size="19" font-weight="bold">San Marino</text><text x="2412" y="1255" font-size="15" font-weight="normal">Florence</text><text x="1755" y="1270" font-size="15" font-weight="normal">Toulouse</text><text x="2015" y="1298" font-size="15" font-weight="normal">Marseille</text><text x="2450" y="1294" font-size="15" font-weight="normal">Perugia</text><text x="2527" y="1288" font-size="15" font-weight="normal">Ancona</text><text x="1400" y="1282" font-size="15" font-weight="normal">Santander</text><text x="1262" y="1293" font-size="15" font-weight="normal">Oviedo</text><text x="1544" y="1343" font-size="15" font-weight="normal">Pamplona</text><text x="1450" y="1393" font-size="15" font-weight="normal">Logrono</text><text x="1337" y="1447" font-size="15" font-weight="normal">Valladolid</text><text x="1595" y="1449" font-size="15" font-weight="normal">Zaragoza</text><text x="1800" y="1470" font-size="19" font-weight="bold">Barcelona</text><text x="2789" y="1496" font-size="15" font-weight="normal">Bari</text><text x="2609" y="1521" font-size="15" font-weight="normal">Naples</text><text x="2494" y="1427" font-size="22" font-weight="bold">Rome</text><text x="2678" y="338" font-size="15" font-weight="normal">Gorzów</text><text x="2797" y="522" font-size="15" font-weight="normal">Wro</text><text x="2802" y="826" font-size="21" font-weight="bold">B</text><text x="1475" y="1331" font-size="15">Vitoria-</text><text x="1476" y="1349" font-size="15">Gasteiz</text><text x="1755" y="1360" font-size="19" font-weight="bold">Andorra</text><text x="1755" y="1381" font-size="19" font-weight="bold">la Vella</text><text x="2408" y="1415" font-size="19" font-weight="bold">Vatican</text><text x="2436" y="1436" font-size="19" font-weight="bold">City</text></g><path d="M1857.5 506L1860.5 506C1863 501 1872.2 493 1872.2 485.5A13.2 13.2 0 1 0 1845.8 485.5C1845.8 493 1855 501 1857.5 506Z" fill="#e8454a"/><circle cx="1859" cy="486.5" r="3.6" fill="#fff"/><path d="M1834.0 545L1837.0 545C1839.5 540 1848.7 532 1848.7 524.5A13.2 13.2 0 1 0 1822.3 524.5C1822.3 532 1831.5 540 1834.0 545Z" fill="#e8454a"/><circle cx="1835.5" cy="525.5" r="3.6" fill="#fff"/><path d="M1890.1 523L1893.1 523C1895.6 518 1904.8 510 1904.8 502.5A13.2 13.2 0 1 0 1878.3999999999999 502.5C1878.3999999999999 510 1887.6 518 1890.1 523Z" fill="#e8454a"/><circle cx="1891.6" cy="503.5" r="3.6" fill="#fff"/><path d="M1909.1 516.5L1912.1 516.5C1914.6 511.5 1923.8 503.5 1923.8 496.0A13.2 13.2 0 1 0 1897.3999999999999 496.0C1897.3999999999999 503.5 1906.6 511.5 1909.1 516.5Z" fill="#e8454a"/><circle cx="1910.6" cy="497.0" r="3.6" fill="#fff"/><path d="M1935.5 505L1938.5 505C1941 500 1950.2 492 1950.2 484.5A13.2 13.2 0 1 0 1923.8 484.5C1923.8 492 1933 500 1935.5 505Z" fill="#e8454a"/><circle cx="1937" cy="485.5" r="3.6" fill="#fff"/><path d="M1941.5 526.5L1944.5 526.5C1947 521.5 1956.2 513.5 1956.2 506.0A13.2 13.2 0 1 0 1929.8 506.0C1929.8 513.5 1939 521.5 1941.5 526.5Z" fill="#e8454a"/><circle cx="1943" cy="507.0" r="3.6" fill="#fff"/><path d="M1932.1 545L1935.1 545C1937.6 540 1946.8 532 1946.8 524.5A13.2 13.2 0 1 0 1920.3999999999999 524.5C1920.3999999999999 532 1929.6 540 1932.1 545Z" fill="#e8454a"/><circle cx="1933.6" cy="525.5" r="3.6" fill="#fff"/><path d="M1956.5 542L1959.5 542C1962 537 1971.2 529 1971.2 521.5A13.2 13.2 0 1 0 1944.8 521.5C1944.8 529 1954 537 1956.5 542Z" fill="#e8454a"/><circle cx="1958" cy="522.5" r="3.6" fill="#fff"/><path d="M1860.5 546L1863.5 546C1866 541 1875.2 533 1875.2 525.5A13.2 13.2 0 1 0 1848.8 525.5C1848.8 533 1858 541 1860.5 546Z" fill="#e8454a" stroke="#2d7a1e" stroke-width="1.6"/><text x="1862" y="532.5" font-size="19" font-weight="bold" fill="#fff" text-anchor="middle" font-family="Liberation Sans">3</text><path d="M1966.5 585L1969.5 585C1972 580 1981.2 572 1981.2 564.5A13.2 13.2 0 1 0 1954.8 564.5C1954.8 572 1964 580 1966.5 585Z" fill="#e8454a" stroke="#2d7a1e" stroke-width="1.6"/><text x="1968" y="571.5" font-size="19" font-weight="bold" fill="#fff" text-anchor="middle" font-family="Liberation Sans">1</text><path d="M1798.5 752L1801.5 752C1804 747 1813.2 739 1813.2 731.5A13.2 13.2 0 1 0 1786.8 731.5C1786.8 739 1796 747 1798.5 752Z" fill="#4aa52b"/><circle cx="1800" cy="732.5" r="3.6" fill="#fff"/><path d="M1535.5 916L1538.5 916C1541 911 1550.2 903 1550.2 895.5A13.2 13.2 0 1 0 1523.8 895.5C1523.8 903 1533 911 1535.5 916Z" fill="#4aa52b"/><circle cx="1537" cy="896.5" r="3.6" fill="#fff"/><path d="M1737.5 1262L1740.5 1262C1743 1257 1752.2 1249 1752.2 1241.5A13.2 13.2 0 1 0 1725.8 1241.5C1725.8 1249 1735 1257 1737.5 1262Z" fill="#4aa52b"/><circle cx="1739" cy="1242.5" r="3.6" fill="#fff"/><path d="M2002.5 1292L2005.5 1292C2008 1287 2017.2 1279 2017.2 1271.5A13.2 13.2 0 1 0 1990.8 1271.5C1990.8 1279 2000 1287 2002.5 1292Z" fill="#4aa52b"/><circle cx="2004" cy="1272.5" r="3.6" fill="#fff"/><path d="M2059.5 1217L2062.5 1217C2065 1212 2074.2 1204 2074.2 1196.5A13.2 13.2 0 1 0 2047.8 1196.5C2047.8 1204 2057 1212 2059.5 1217Z" fill="#4aa52b"/><circle cx="2061" cy="1197.5" r="3.6" fill="#fff"/><path d="M1964.5 1058L1967.5 1058C1970 1053 1979.2 1045 1979.2 1037.5A13.2 13.2 0 1 0 1952.8 1037.5C1952.8 1045 1962 1053 1964.5 1058Z" fill="#4aa52b"/><circle cx="1966" cy="1038.5" r="3.6" fill="#fff"/><path d="M1981.5 1042L1984.5 1042C1987 1037 1996.2 1029 1996.2 1021.5A13.2 13.2 0 1 0 1969.8 1021.5C1969.8 1029 1979 1037 1981.5 1042Z" fill="#4aa52b"/><circle cx="1983" cy="1022.5" r="3.6" fill="#fff"/><path d="M2401.5 1178L2404.5 1178C2407 1173 2416.2 1165 2416.2 1157.5A13.2 13.2 0 1 0 2389.8 1157.5C2389.8 1165 2399 1173 2401.5 1178Z" fill="#4aa52b"/><circle cx="2403" cy="1158.5" r="3.6" fill="#fff"/><path d="M2213.5 902L2216.5 902C2219 897 2228.2 889 2228.2 881.5A13.2 13.2 0 1 0 2201.8 881.5C2201.8 889 2211 897 2213.5 902Z" fill="#4aa52b" stroke="#2d7a1e" stroke-width="1.6"/><text x="2215" y="888.5" font-size="19" font-weight="bold" fill="#fff" text-anchor="middle" font-family="Liberation Sans">2</text><path d="M2052.5 1015L2055.5 1015C2058 1010 2067.2 1002 2067.2 994.5A13.2 13.2 0 1 0 2040.8 994.5C2040.8 1002 2050 1010 2052.5 1015Z" fill="#4aa52b" stroke="#2d7a1e" stroke-width="1.6"/><text x="2054" y="1001.5" font-size="19" font-weight="bold" fill="#fff" text-anchor="middle" font-family="Liberation Sans">4</text></svg><div style="position:absolute;left:1139px;top:266px;width:38px;height:38px;background:#fff;border-radius:6px;box-shadow:0 1px 5px rgba(0,0,0,.45)"></div><div style="position:absolute;left:1139px;top:319px;width:38px;height:38px;background:#fff;border-radius:6px;box-shadow:0 1px 5px rgba(0,0,0,.45)"></div><div style="position:absolute;left:1139px;top:372px;width:38px;height:38px;background:#fff;border-radius:6px;box-shadow:0 2px 5px rgba(90,80,180,.75)"></div><div style="position:absolute;left:1139px;top:425px;width:38px;height:38px;background:#fff;border-radius:6px;box-shadow:0 2px 5px rgba(90,80,180,.75)"></div><div style="position:absolute;left:1139px;top:478px;width:38px;height:38px;background:#fff;border-radius:6px;box-shadow:0 2px 5px rgba(90,80,180,.75)"></div><svg style="position:absolute;left:1149px;top:275px;" width="18" height="22" viewBox="0 0 18 22"><path d="M9 1C5 1 2 4 2 8c0 5 7 12 7 12s7-7 7-12c0-4-3-7-7-7z" fill="#111"/><circle cx="9" cy="8" r="2.8" fill="#fff"/></svg><svg style="position:absolute;left:1149px;top:329px;" width="18" height="21" viewBox="0 0 18 21"><rect x="4" y="1" width="10" height="19" rx="4" fill="#111"/><circle cx="9" cy="5.5" r="2" fill="#fff"/><circle cx="9" cy="10.5" r="2" fill="#fff"/><circle cx="9" cy="15.5" r="2" fill="#fff"/><path d="M1 5h3M14 5h3M1 10h3M14 10h3M1 15h3M14 15h3" stroke="#111" stroke-width="1.6"/></svg><svg style="position:absolute;left:1147px;top:383px;" width="22" height="20" viewBox="0 0 22 20"><path d="M0 3h13v12H0z" fill="#111"/><path d="M13 7h5l4 4v4h-9z" fill="#111"/><circle cx="4.5" cy="16" r="2.6" fill="#111" stroke="#fff" stroke-width="1.2"/><circle cx="17" cy="16" r="2.6" fill="#111" stroke="#fff" stroke-width="1.2"/></svg><svg style="position:absolute;left:1148px;top:435px;" width="20" height="22" viewBox="0 0 20 22"><circle cx="14" cy="4" r="2.8" fill="none" stroke="#111" stroke-width="2"/><path d="M14 7L12 10H6C3 10 3 14 6 14h8c3 0 3 5 0 5H6" fill="none" stroke="#111" stroke-width="2"/><circle cx="3.5" cy="14" r="2.3" fill="#111"/></svg><svg style="position:absolute;left:1148px;top:488px;" width="20" height="22" viewBox="0 0 20 22"><circle cx="10" cy="3.5" r="2.5" fill="none" stroke="#111" stroke-width="2"/><path d="M10 6v14M6 9h8M2 13c0 5 4 7 8 7s8-2 8-7" fill="none" stroke="#111" stroke-width="2.2"/><path d="M0 14l2-3 3 3z" fill="#111"/><path d="M20 14l-2-3-3 3z" fill="#111"/></svg><div style="position:absolute;left:2751px;top:265px;width:53px;height:54px;background:#fff;border-radius:7px;box-shadow:0 1px 5px rgba(0,0,0,.35)"></div><svg style="position:absolute;left:2760px;top:274px;" width="36" height="36" viewBox="0 0 36 36"><path d="M18 22L2 14l16-8 16 8z" fill="#b5b5b5"/><path d="M18 18L2 10l16-8 16 8z" fill="#cfcfcf" stroke="#e8e8e8" stroke-width="1"/><path d="M2 18l16 8 16-8" fill="none" stroke="#a8a8a8" stroke-width="3"/><path d="M2 22l16 8 16-8" fill="none" stroke="#a8a8a8" stroke-width="3"/></svg><div style="position:absolute;left:2697px;top:333px;width:107px;height:53px;background:#fff;border-radius:7px;box-shadow:0 1px 4px rgba(0,0,0,.3)"></div><div style="position:absolute;left:2705px;top:338px;font-size:17.4px;line-height:17.4px;color:#444;font-weight:normal;white-space:nowrap;">2123.90 km</div><div style="position:absolute;left:2705px;top:360px;font-size:17.4px;line-height:17.4px;color:#444;font-weight:normal;white-space:nowrap;">19:14:55</div><div style="position:absolute;left:1132px;top:1490px;width:93px;height:23px;background:rgba(255,255,255,.55);border:3px solid #777;border-top:none;box-sizing:border-box"></div><div style="position:absolute;left:1143px;top:1494px;font-size:15.4px;line-height:15.4px;color:#333;font-weight:normal;white-space:nowrap;">100 km</div><div style="position:absolute;left:2764px;top:1404px;width:41px;height:80px;background:#fff;border:2px solid rgba(110,100,190,.45);border-radius:6px;box-sizing:border-box;box-shadow:0 0 3px rgba(90,80,170,.5)"></div><div style="position:absolute;left:2766px;top:1443px;width:37px;height:1px;background:#ccc"></div><svg style="position:absolute;left:2775px;top:1413px;" width="19" height="19" viewBox="0 0 19 19"><path d="M9.5 1v17M1 9.5h17" stroke="#555" stroke-width="2.6"/></svg><div style="position:absolute;left:2777px;top:1462px;width:15px;height:2.6px;background:#555"></div><div style="position:absolute;left:2756px;top:1498px;width:63px;height:24px;background:rgba(255,255,255,.75)"></div><div style="position:absolute;left:2763px;top:1502px;font-size:16px;line-height:16px;color:#888;font-weight:normal;white-space:nowrap;">Leaflet</div><div style="position:absolute;left:1122px;top:250px;width:1px;height:1272px;background:#cfcfcf"></div><div style="position:absolute;left:2819px;top:250px;width:1px;height:1272px;background:#cfcfcf"></div><div style="position:absolute;left:1122px;top:1522px;width:1698px;height:1px;background:#cfcfcf"></div></body></html>
